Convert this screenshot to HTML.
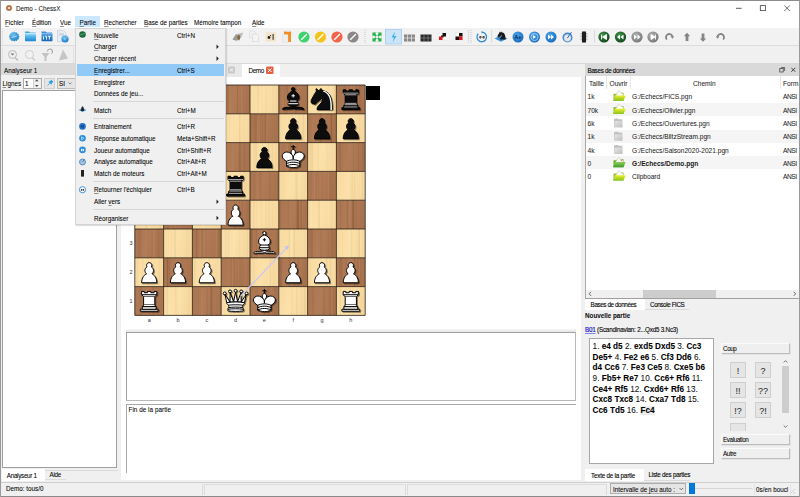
<!DOCTYPE html>
<html><head><meta charset="utf-8">
<style>
*{box-sizing:border-box;margin:0;padding:0}
html,body{width:800px;height:497px;overflow:hidden;background:#f0f0f0}
body{position:relative;font-family:"Liberation Sans",sans-serif;font-size:6.3px;color:#000;line-height:1;-webkit-text-stroke:0.1px rgba(0,0,0,.7)}
.a{position:absolute}
.t{position:absolute;white-space:nowrap}
.u{text-decoration:underline;text-decoration-thickness:0.4px;text-underline-offset:0.65px;text-decoration-color:rgba(0,0,0,.4)}
.sm{font-size:5.6px}
</style></head><body>
<div class="a" style="left:0px;top:0px;width:800px;height:497px;border:1px solid #9a9a9a;border-top-color:#8c8c8c"></div>
<div class="a" style="left:1px;top:1px;width:798px;height:15px;background:#fff"></div>
<div class="a" style="left:5.6px;top:4.6px;width:6.8px;height:6.8px;border-radius:50%;background:#b5764f"></div>
<div class="a" style="left:8px;top:7px;width:2px;height:2px;background:#eadbd0"></div>
<div class="t" style="left:16px;top:5.80px;color:#202020">Demo - ChessX</div>
<svg class="a" style="left:0;top:0" width="800" height="16" viewBox="0 0 800 16"><path d="M736 8.3h5.6" stroke="#333" stroke-width=".8"/><rect x="760.3" y="5.6" width="5.2" height="5" fill="none" stroke="#444" stroke-width=".8"/><path d="M784.3 5.4l5.6 5.6M789.9 5.4l-5.6 5.6" stroke="#333" stroke-width=".7"/></svg>
<div class="a" style="left:1px;top:16px;width:798px;height:12px;background:#fff"></div>
<div class="a" style="left:75px;top:16px;width:25px;height:11px;background:#cce8ff"></div>
<div class="t" style="left:5px;top:20.40px;"><span class="u">F</span>ichier</div>
<div class="t" style="left:32px;top:20.40px;"><span class="u">É</span>dition</div>
<div class="t" style="left:60px;top:20.40px;"><span class="u">V</span>ue</div>
<div class="t" style="left:79.5px;top:20.40px;"><span class="u">P</span>artie</div>
<div class="t" style="left:104px;top:20.40px;"><span class="u">R</span>echercher</div>
<div class="t" style="left:144px;top:20.40px;"><span class="u">B</span>ase de parties</div>
<div class="t" style="left:194px;top:20.40px;">Mémoire tampon</div>
<div class="t" style="left:252px;top:20.40px;"><span class="u">A</span>ide</div>
<div class="a" style="left:1px;top:28px;width:798px;height:17px;background:#f2f2f2"></div>
<div class="a" style="left:1px;top:45px;width:798px;height:1px;background:#dcdcdc"></div>
<div class="a" style="left:1px;top:46px;width:798px;height:17px;background:#f0f0f0"></div>
<div class="a" style="left:1px;top:63px;width:798px;height:1px;background:#d8d8d8"></div>
<svg class="a" style="left:0;top:0" width="800" height="64" viewBox="0 0 800 64">
<defs>
<radialGradient id="gb" cx="0.4" cy="0.35" r="0.7"><stop offset="0" stop-color="#6cc3f2"/><stop offset="1" stop-color="#1b78c4"/></radialGradient>
<radialGradient id="gb2" cx="0.4" cy="0.35" r="0.75"><stop offset="0" stop-color="#4aa6ee"/><stop offset="1" stop-color="#1263b6"/></radialGradient>
<radialGradient id="gg" cx="0.4" cy="0.35" r="0.7"><stop offset="0" stop-color="#3f9a4a"/><stop offset="1" stop-color="#0f3d18"/></radialGradient>
<radialGradient id="gy" cx="0.4" cy="0.35" r="0.7"><stop offset="0" stop-color="#b5b5b5"/><stop offset="1" stop-color="#727272"/></radialGradient>
</defs>
<!-- row1 left -->
<defs>
<linearGradient id="fl1" x1="0" y1="0" x2="0" y2="1"><stop offset="0" stop-color="#b5e4fa"/><stop offset=".35" stop-color="#5dbaf0"/><stop offset="1" stop-color="#1c86d0"/></linearGradient>
<linearGradient id="fl2" x1="0" y1="0" x2="0" y2="1"><stop offset="0" stop-color="#5aa8e6"/><stop offset="1" stop-color="#1462b4"/></linearGradient>
</defs>
<g>
<path d="M14 31.6l1.2 1 1.5-.4.5 1.4 1.5.4-.2 1.5 1.1 1.1-1 1.1.3 1.5-1.5.4-.5 1.4-1.5-.4-1.2 1-1.2-1-1.5.4-.5-1.4-1.5-.4.3-1.5-1-1.1 1.1-1.1-.2-1.5 1.5-.4.5-1.4 1.5.4z" fill="url(#gb)"/>
<path d="M11.2 37.6l5.6-1.6" stroke="#d8f0fc" stroke-width=".8" opacity=".8"/>
<path d="M25 33v-1.6h4.2l.8 1h5.6v.6z" fill="#49a9e6"/>
<rect x="25" y="33.3" width="11" height="7.9" rx=".6" fill="url(#fl1)"/>
<path d="M41.5 33v-1.6h4.2l.8 1h5.6v.6z" fill="#3d8fd8"/>
<rect x="41.5" y="33.3" width="11" height="7.9" rx=".6" fill="url(#fl2)"/>
<path d="M43.5 36.3v3.3M45 36.3h1.5v3.3M48 36.3h2.8M49.4 36.3v3.3" stroke="#f2f8fd" stroke-width=".9" fill="none"/>
<path d="M57.5 30.5h6l2.5 2.5v8.5h-8.5z" fill="#e9eef4" stroke="#b9c3cf" stroke-width=".5"/>
<rect x="59" y="33" width="5" height="3" fill="#cfd9e4"/>
<circle cx="65" cy="39" r="3.6" fill="url(#gb)"/>
<path d="M63.5 37.5c1 .3 1.5 1.3 1.2 2.5M66 36.2c.3 1 .8 1.6 1.7 1.7" stroke="#dff1fb" stroke-width=".5" fill="none"/>
</g>
<!-- row1 after menu -->
<g>
<path d="M232.5 39.5l3.5-5.5 3 1.5-2.5 5.5z" fill="#9a9a9a"/><path d="M237 34l6-1.5-1.5 5-3.5.5z" fill="#bdbdbd"/><ellipse cx="238.7" cy="37.5" rx="1.6" ry="2.8" fill="#8a6a45"/><path d="M236.5 41l3.5-1" stroke="#d9d9d9" stroke-width="1"/>
<path d="M249.5 31h4.5l1.5 1.5v5.5h-6z" fill="#f1f1f1" stroke="#d2d2d2" stroke-width=".5"/><path d="M252.5 34h4.5l1.5 1.5v6h-6z" fill="#f4f4f4" stroke="#cfcfcf" stroke-width=".5"/>
<rect x="265.5" y="32.3" width="10.5" height="9.2" fill="#f3e3c8"/><circle cx="269" cy="37.5" r="1.4" fill="#222"/><circle cx="270.6" cy="35.5" r=".6" fill="#222"/><rect x="272.6" y="34" width="1" height="5.8" fill="#222"/>
<path d="M284 31.5h7v10.5h-7z" fill="#f28d1e"/><path d="M286.5 30.5h3v1.5h-3z" fill="#dedede"/><path d="M282.5 34.5h5.5v7.8h-5.5z" fill="#efefef" stroke="#d5d5d5" stroke-width=".4"/>
<circle cx="304" cy="37" r="5.6" fill="#3fd36f"/><path d="M301.5 39.5l5-5" stroke="#fff" stroke-width="1.4" stroke-linecap="round"/>
<circle cx="320.5" cy="37" r="5.6" fill="#f6c21c"/><path d="M318 39.5l5-5" stroke="#fff" stroke-width="1.4" stroke-linecap="round"/>
<circle cx="337" cy="37" r="5.6" fill="#f2634c"/><path d="M334.5 39.5l5-5" stroke="#fff" stroke-width="1.4" stroke-linecap="round"/>
<circle cx="353" cy="37" r="5.6" fill="#8b8787"/><path d="M350.5 39.5l5-5" stroke="#fff" stroke-width="1.4" stroke-linecap="round"/>
<path d="M365 30v13" stroke="#bdbdbd" stroke-width=".8" stroke-dasharray="1 1"/>
<g fill="#1fb24a"><path d="M372.5 32.5h4l-1.3 1.3 1.6 1.6-1.4 1.4-1.6-1.6-1.3 1.3z"/><path d="M381.5 32.5v4l-1.3-1.3-1.6 1.6-1.4-1.4 1.6-1.6-1.3-1.3z"/><path d="M372.5 41.5v-4l1.3 1.3 1.6-1.6 1.4 1.4-1.6 1.6 1.3 1.3z"/><path d="M381.5 41.5h-4l1.3-1.3-1.6-1.6 1.4-1.4 1.6 1.6 1.3-1.3z"/></g>
<rect x="385.5" y="29.5" width="16" height="14.5" fill="#cce4f7" stroke="#a5cdee" stroke-width=".8"/>
<path d="M395 31.5l-3.5 6h2.5l-1.5 5 4-6.5h-2.5z" fill="#38b2e6"/>
<rect x="404" y="34.5" width="11" height="7" fill="#888"/><path d="M404 38h11M407.5 34.5v7M411.5 34.5v7" stroke="#eee" stroke-width=".7"/>
<rect x="420.5" y="34.5" width="11" height="7" fill="#2a2a2a"/><path d="M420.5 38h11M424 34.5v7M428 34.5v7" stroke="#999" stroke-width=".6"/>
<rect x="439" y="33" width="7" height="7" fill="#fff" stroke="#ddd" stroke-width=".4"/><rect x="442.5" y="33" width="3.5" height="3.5" fill="#111"/><rect x="441" y="35.5" width="2.5" height="2" fill="#111"/><rect x="439" y="36.5" width="3.5" height="3.5" fill="#e01616"/>
<rect x="455.5" y="33" width="7" height="7" fill="#fff" stroke="#ddd" stroke-width=".4"/><rect x="459" y="33" width="3.5" height="3.5" fill="#111"/><rect x="455.5" y="36.5" width="3.5" height="3.5" fill="#111"/><rect x="459" y="36.5" width="3.5" height="3.5" fill="#e01616"/>
<path d="M468.6 30v13" stroke="#d0d0d0" stroke-width=".7"/><path d="M471 30v13" stroke="#bdbdbd" stroke-width=".8" stroke-dasharray="1 1"/>
<path d="M478.2 33.8a4.8 4.8 0 1 0 4-1.6" fill="none" stroke="#2a8ad6" stroke-width="1.3"/><path d="M481.5 31l1.8 1.3-1.6 1.4z" fill="#2a8ad6"/><circle cx="480.4" cy="37.3" r="1.2" fill="#222"/><circle cx="483.6" cy="37.3" r="1.2" fill="#222"/><path d="M479 37.3h6" stroke="#fff" stroke-width=".4"/>
<path d="M491.6 30v13" stroke="#d0d0d0" stroke-width=".7"/>
<path d="M494.5 38.5l6.5-3.2 6.5 3.2-6.5 3.2z" fill="#3f92d8"/>
<g transform="translate(496,29.8) scale(.25)"><path d="M 22,10 C 32.5,11 38.5,18 38,39 L 15,39 C 15,30 25,32.5 23,18 C 24.38,20.91 18.45,25.37 16,27 C 13,29 13.18,31.34 11,31 C 9.958,30.06 12.41,27.96 11,28 C 10,28 11.19,29.23 10,30 C 9,30 5.997,31 6,26 C 6,24 12,14 12,14 C 12,14 13.89,12.1 14,10.5 C 13.27,9.506 13.5,8.5 13.5,7.5 C 14.5,6.5 16.5,10 16.5,10 L 18.5,10 C 18.5,10 19.28,8.008 21,7 C 22,7 22,10 22,10 z" fill="#1a1a1a"/></g>
<circle cx="518" cy="37" r="5.5" fill="url(#gb2)"/><text x="514.6" y="39.2" font-size="5.2" fill="#0a2240" font-weight="bold" font-family="Liberation Sans">A+</text>
<circle cx="534.5" cy="37" r="5.5" fill="url(#gb2)"/><circle cx="534.5" cy="37" r="3.6" fill="none" stroke="#cfe8fb" stroke-width=".7"/><path d="M533 35l3 2-3 2z" fill="#e9f5ff"/>
<circle cx="551" cy="37" r="5.5" fill="url(#gb2)"/><path d="M548 34.6l3 2.4-3 2.4zM551 34.6l3 2.4-3 2.4z" fill="#f2f9ff"/>
<circle cx="567.5" cy="37.5" r="5" fill="#3f86cf"/><circle cx="567.5" cy="37.8" r="3.6" fill="#e6ebef" stroke="#9aa9b6" stroke-width=".4"/><path d="M567.3 38.2l4.2-6" stroke="#2667c2" stroke-width="1"/>
<rect x="582" y="31.5" width="4" height="11" fill="#1e1e1e"/><path d="M581.2 33v8M586.8 33v8" stroke="#555" stroke-width=".7" stroke-dasharray=".8 .8"/>
<path d="M594.5 30v13" stroke="#d0d0d0" stroke-width=".7"/>
<circle cx="604" cy="37" r="5.6" fill="url(#gg)"/><path d="M601.5 34.5v5M606.5 34.5l-4 2.5 4 2.5z" fill="#fff" stroke="#fff" stroke-width=".9"/>
<circle cx="620.5" cy="37" r="5.6" fill="url(#gg)"/><path d="M620 34.5l-3 2.5 3 2.5zM623.5 34.5l-3 2.5 3 2.5z" fill="#fff"/>
<circle cx="637" cy="37" r="5.6" fill="url(#gy)"/><path d="M634 34.5l3 2.5-3 2.5zM637.5 34.5l3 2.5-3 2.5z" fill="#fff"/>
<circle cx="653" cy="37" r="5.6" fill="url(#gy)"/><path d="M655.5 34.5v5M651 34.5l4 2.5-4 2.5z" fill="#fff" stroke="#fff" stroke-width=".9"/>
<path d="M666.8 39.5a3.3 3.3 0 1 1 5.6-3.2" fill="none" stroke="#7d7d7d" stroke-width="1.7"/><path d="M670.5 36.2h3.6l-1.6 2.6z" fill="#7d7d7d"/>
<path d="M687 32.8l-3.2 3.4h1.8v4.8h2.8v-4.8h1.8z" fill="#858585"/>
<path d="M703 41.8l-3.2-3.4h1.8v-4.8h2.8v4.8h1.8z" fill="#858585"/>
<path d="M723.2 39.5a3.3 3.3 0 1 0 -5.6-3.2" fill="none" stroke="#7d7d7d" stroke-width="1.7"/><path d="M719.5 36.2h-3.6l1.6 2.6z" fill="#7d7d7d"/>
</g>
<!-- row2 left -->
<g opacity=".75">
<path d="M2.5 31v13M2.5 48v14" stroke="#c4c4c4" stroke-width=".8" stroke-dasharray="1 1"/>
<circle cx="12.5" cy="54.5" r="4" fill="#eee" stroke="#a9a9a9" stroke-width="1"/><path d="M15 57.5l3 3" stroke="#a9a9a9" stroke-width="1.5"/><path d="M10.5 53.5h4l-2 2z" fill="#555"/>
<circle cx="29.5" cy="54.5" r="4" fill="#f2f2f2" stroke="#c2c2c2" stroke-width="1"/><path d="M32 57.5l3 3" stroke="#c2c2c2" stroke-width="1.5"/>
<path d="M41.5 53h8l-3 4v4h-2v-4z" fill="#b5b5b5"/><path d="M47.5 51.5a2.5 2.5 0 1 1 4 2" fill="none" stroke="#8c8c8c" stroke-width="1.1"/>
<path d="M63 49.5l-4 11 9-2z" fill="#b8b8b8"/>
<path d="M73.5 47v16" stroke="#d5d5d5" stroke-width=".8"/>
</g>
</svg>

<div class="a" style="left:1px;top:64px;width:116px;height:11px;background:#d9d9d9"></div>
<div class="t" style="left:4px;top:68.00px;">Analyseur 1</div>
<div class="t" style="left:2.5px;top:80.80px;"><span class="u">L</span>ignes</div>
<div class="a" style="left:23px;top:77.5px;width:18.5px;height:11px;background:#fff;border:1px solid #a9a9a9"></div>
<div class="a" style="left:33px;top:78.5px;width:7.5px;height:9px;background:#f0f0f0;border-left:1px solid #d0d0d0"></div>
<div class="t" style="left:25px;top:81.40px;">1</div>
<div class="a" style="left:43.5px;top:77.5px;width:11px;height:11px;background:#e5e5e5;border:1px solid #cfcfcf"></div>
<div class="a" style="left:57px;top:77.5px;width:19px;height:11px;background:#e5e5e5;border:1px solid #bdbdbd"></div>
<div class="t" style="left:59px;top:81.40px;">SI</div>
<svg class="a" style="left:0;top:70px" width="120" height="22" viewBox="0 70 120 22"><path d="M35.4 81.3l1.4-1.6 1.4 1.6M35.4 85l1.4 1.6 1.4-1.6" fill="#333" stroke="#333" stroke-width=".5"/><path d="M47.5 85.5l2-2" stroke="#2fa0e6" stroke-width=".9"/><path d="M48.3 81.8l3 3 .6-1.6 1.4-1.4-2-2-1.4 1.4z" fill="#2fa0e6"/><path d="M68.5 82.5l1.6 1.6 1.6-1.6" fill="none" stroke="#444" stroke-width=".6"/></svg>
<div class="a" style="left:2px;top:89.5px;width:115px;height:378px;background:#fff;border:1px solid #a0a0a0"></div>
<div class="a" style="left:44.5px;top:469.5px;width:73px;height:1px;background:#dadada"></div>
<div class="a" style="left:1.5px;top:469px;width:43px;height:12px;background:#fff"></div>
<div class="t" style="left:6.8px;top:472.90px;letter-spacing:-0.3px">Analyseur 1</div>
<div class="t" style="left:49.6px;top:472.10px;letter-spacing:-0.3px">Aide</div>
<div class="a" style="left:44.5px;top:478.5px;width:21.5px;height:1px;background:#dcdcdc"></div>
<div class="a" style="left:120.6px;top:77px;width:460.8px;height:402.5px;background:#fff"></div>
<div class="a" style="left:242px;top:64px;width:38px;height:13px;background:#fff"></div>
<div class="a" style="left:226px;top:64px;width:16px;height:13px;background:#e9e9e9"></div>
<svg class="a" style="left:0;top:60px" width="300" height="20" viewBox="0 60 300 20"><rect x="228" y="66.5" width="7" height="7" rx="1" fill="#c9c9c9"/><path d="M230 68.5l3 3M233 68.5l-3 3" stroke="#fff" stroke-width=".9"/><rect x="266" y="66.5" width="7.5" height="7.5" rx="1" fill="#e5603e"/><path d="M268 68.5l3.5 3.5M271.5 68.5l-3.5 3.5" stroke="#fff" stroke-width="1"/></svg>
<div class="t" style="left:248.6px;top:68.30px;letter-spacing:-0.4px">Demo</div>
<div class="a" style="left:126px;top:329px;width:450px;height:3px;background:linear-gradient(#f6f6f6,#e4e4e4)"></div>
<div class="a" style="left:126px;top:332px;width:450px;height:69px;border:1px solid #a0a0a0;border-right-color:#b8b8b8;border-bottom-color:#b8b8b8;background:#fff"></div>
<div class="a" style="left:126px;top:404px;width:450px;height:1px;background:#a8a8a8"></div>
<div class="a" style="left:126px;top:404px;width:1px;height:69px;background:#a8a8a8"></div>
<div class="t" style="left:128.5px;top:407.20px;letter-spacing:0.05px">Fin de la partie</div>
<svg class="a" style="left:0;top:0" width="800" height="497" viewBox="0 0 800 497">
<defs>
<filter id="sh" x="-20%" y="-20%" width="150%" height="150%"><feGaussianBlur in="SourceAlpha" stdDeviation="0.9"/><feOffset dx="1.2" dy="1.2"/><feComponentTransfer><feFuncA type="linear" slope="0.45"/></feComponentTransfer><feMerge><feMergeNode/><feMergeNode in="SourceGraphic"/></feMerge></filter>
<linearGradient id="dk" x1="0" y1="0" x2="1" y2="0.2"><stop offset="0" stop-color="#a97450"/><stop offset=".5" stop-color="#b07b56"/><stop offset="1" stop-color="#a7724e"/></linearGradient>
<linearGradient id="lt" x1="0" y1="0" x2="1" y2="0.2"><stop offset="0" stop-color="#f8daa0"/><stop offset=".5" stop-color="#fbe0a8"/><stop offset="1" stop-color="#f6d89e"/></linearGradient>
</defs>
<rect x="134.80" y="286.60" width="28.80" height="28.80" fill="url(#dk)"/>
<rect x="134.80" y="257.80" width="28.80" height="28.80" fill="url(#lt)"/>
<rect x="134.80" y="229.00" width="28.80" height="28.80" fill="url(#dk)"/>
<rect x="134.80" y="200.20" width="28.80" height="28.80" fill="url(#lt)"/>
<rect x="134.80" y="171.40" width="28.80" height="28.80" fill="url(#dk)"/>
<rect x="134.80" y="142.60" width="28.80" height="28.80" fill="url(#lt)"/>
<rect x="134.80" y="113.80" width="28.80" height="28.80" fill="url(#dk)"/>
<rect x="134.80" y="85.00" width="28.80" height="28.80" fill="url(#lt)"/>
<rect x="163.60" y="286.60" width="28.80" height="28.80" fill="url(#lt)"/>
<rect x="163.60" y="257.80" width="28.80" height="28.80" fill="url(#dk)"/>
<rect x="163.60" y="229.00" width="28.80" height="28.80" fill="url(#lt)"/>
<rect x="163.60" y="200.20" width="28.80" height="28.80" fill="url(#dk)"/>
<rect x="163.60" y="171.40" width="28.80" height="28.80" fill="url(#lt)"/>
<rect x="163.60" y="142.60" width="28.80" height="28.80" fill="url(#dk)"/>
<rect x="163.60" y="113.80" width="28.80" height="28.80" fill="url(#lt)"/>
<rect x="163.60" y="85.00" width="28.80" height="28.80" fill="url(#dk)"/>
<rect x="192.40" y="286.60" width="28.80" height="28.80" fill="url(#dk)"/>
<rect x="192.40" y="257.80" width="28.80" height="28.80" fill="url(#lt)"/>
<rect x="192.40" y="229.00" width="28.80" height="28.80" fill="url(#dk)"/>
<rect x="192.40" y="200.20" width="28.80" height="28.80" fill="url(#lt)"/>
<rect x="192.40" y="171.40" width="28.80" height="28.80" fill="url(#dk)"/>
<rect x="192.40" y="142.60" width="28.80" height="28.80" fill="url(#lt)"/>
<rect x="192.40" y="113.80" width="28.80" height="28.80" fill="url(#dk)"/>
<rect x="192.40" y="85.00" width="28.80" height="28.80" fill="url(#lt)"/>
<rect x="221.20" y="286.60" width="28.80" height="28.80" fill="url(#lt)"/>
<rect x="221.20" y="257.80" width="28.80" height="28.80" fill="url(#dk)"/>
<rect x="221.20" y="229.00" width="28.80" height="28.80" fill="url(#lt)"/>
<rect x="221.20" y="200.20" width="28.80" height="28.80" fill="url(#dk)"/>
<rect x="221.20" y="171.40" width="28.80" height="28.80" fill="url(#lt)"/>
<rect x="221.20" y="142.60" width="28.80" height="28.80" fill="url(#dk)"/>
<rect x="221.20" y="113.80" width="28.80" height="28.80" fill="url(#lt)"/>
<rect x="221.20" y="85.00" width="28.80" height="28.80" fill="url(#dk)"/>
<rect x="250.00" y="286.60" width="28.80" height="28.80" fill="url(#dk)"/>
<rect x="250.00" y="257.80" width="28.80" height="28.80" fill="url(#lt)"/>
<rect x="250.00" y="229.00" width="28.80" height="28.80" fill="url(#dk)"/>
<rect x="250.00" y="200.20" width="28.80" height="28.80" fill="url(#lt)"/>
<rect x="250.00" y="171.40" width="28.80" height="28.80" fill="url(#dk)"/>
<rect x="250.00" y="142.60" width="28.80" height="28.80" fill="url(#lt)"/>
<rect x="250.00" y="113.80" width="28.80" height="28.80" fill="url(#dk)"/>
<rect x="250.00" y="85.00" width="28.80" height="28.80" fill="url(#lt)"/>
<rect x="278.80" y="286.60" width="28.80" height="28.80" fill="url(#lt)"/>
<rect x="278.80" y="257.80" width="28.80" height="28.80" fill="url(#dk)"/>
<rect x="278.80" y="229.00" width="28.80" height="28.80" fill="url(#lt)"/>
<rect x="278.80" y="200.20" width="28.80" height="28.80" fill="url(#dk)"/>
<rect x="278.80" y="171.40" width="28.80" height="28.80" fill="url(#lt)"/>
<rect x="278.80" y="142.60" width="28.80" height="28.80" fill="url(#dk)"/>
<rect x="278.80" y="113.80" width="28.80" height="28.80" fill="url(#lt)"/>
<rect x="278.80" y="85.00" width="28.80" height="28.80" fill="url(#dk)"/>
<rect x="307.60" y="286.60" width="28.80" height="28.80" fill="url(#dk)"/>
<rect x="307.60" y="257.80" width="28.80" height="28.80" fill="url(#lt)"/>
<rect x="307.60" y="229.00" width="28.80" height="28.80" fill="url(#dk)"/>
<rect x="307.60" y="200.20" width="28.80" height="28.80" fill="url(#lt)"/>
<rect x="307.60" y="171.40" width="28.80" height="28.80" fill="url(#dk)"/>
<rect x="307.60" y="142.60" width="28.80" height="28.80" fill="url(#lt)"/>
<rect x="307.60" y="113.80" width="28.80" height="28.80" fill="url(#dk)"/>
<rect x="307.60" y="85.00" width="28.80" height="28.80" fill="url(#lt)"/>
<rect x="336.40" y="286.60" width="28.80" height="28.80" fill="url(#lt)"/>
<rect x="336.40" y="257.80" width="28.80" height="28.80" fill="url(#dk)"/>
<rect x="336.40" y="229.00" width="28.80" height="28.80" fill="url(#lt)"/>
<rect x="336.40" y="200.20" width="28.80" height="28.80" fill="url(#dk)"/>
<rect x="336.40" y="171.40" width="28.80" height="28.80" fill="url(#lt)"/>
<rect x="336.40" y="142.60" width="28.80" height="28.80" fill="url(#dk)"/>
<rect x="336.40" y="113.80" width="28.80" height="28.80" fill="url(#lt)"/>
<rect x="336.40" y="85.00" width="28.80" height="28.80" fill="url(#dk)"/>
<g><rect x="144.5" y="286.6" width="0.6" height="28.8" fill="#d8a57c" opacity="0.13"/><rect x="150.2" y="286.6" width="0.8" height="28.8" fill="#5a3218" opacity="0.06"/><rect x="136.8" y="286.6" width="0.9" height="28.8" fill="#d8a57c" opacity="0.06"/><rect x="147.2" y="286.6" width="1.4" height="28.8" fill="#d8a57c" opacity="0.07"/><rect x="152.6" y="286.6" width="1.5" height="28.8" fill="#5a3218" opacity="0.13"/><rect x="162.0" y="286.6" width="0.5" height="28.8" fill="#d8a57c" opacity="0.16"/><rect x="139.7" y="286.6" width="0.5" height="28.8" fill="#5a3218" opacity="0.09"/><rect x="140.6" y="286.6" width="1.1" height="28.8" fill="#5a3218" opacity="0.13"/><rect x="150.5" y="286.6" width="0.5" height="28.8" fill="#d8a57c" opacity="0.06"/><rect x="154.0" y="257.8" width="0.9" height="28.8" fill="#c9a268" opacity="0.09"/><rect x="147.9" y="257.8" width="0.8" height="28.8" fill="#c9a268" opacity="0.15"/><rect x="142.3" y="257.8" width="1.1" height="28.8" fill="#c9a268" opacity="0.12"/><rect x="155.3" y="257.8" width="0.7" height="28.8" fill="#fff6dc" opacity="0.18"/><rect x="147.0" y="257.8" width="1.3" height="28.8" fill="#c9a268" opacity="0.07"/><rect x="136.9" y="257.8" width="1.2" height="28.8" fill="#c9a268" opacity="0.15"/><rect x="159.3" y="257.8" width="0.8" height="28.8" fill="#c9a268" opacity="0.14"/><rect x="151.3" y="257.8" width="0.9" height="28.8" fill="#c9a268" opacity="0.16"/><rect x="148.5" y="257.8" width="1.2" height="28.8" fill="#c9a268" opacity="0.06"/><rect x="153.1" y="229.0" width="1.6" height="28.8" fill="#d8a57c" opacity="0.16"/><rect x="146.1" y="229.0" width="1.2" height="28.8" fill="#5a3218" opacity="0.05"/><rect x="140.3" y="229.0" width="0.5" height="28.8" fill="#5a3218" opacity="0.06"/><rect x="139.3" y="229.0" width="0.7" height="28.8" fill="#5a3218" opacity="0.10"/><rect x="138.0" y="229.0" width="0.9" height="28.8" fill="#5a3218" opacity="0.12"/><rect x="157.8" y="229.0" width="1.4" height="28.8" fill="#5a3218" opacity="0.09"/><rect x="145.4" y="229.0" width="1.5" height="28.8" fill="#d8a57c" opacity="0.17"/><rect x="140.5" y="229.0" width="0.7" height="28.8" fill="#5a3218" opacity="0.08"/><rect x="151.6" y="229.0" width="0.7" height="28.8" fill="#5a3218" opacity="0.05"/><rect x="145.7" y="200.2" width="1.1" height="28.8" fill="#c9a268" opacity="0.17"/><rect x="149.6" y="200.2" width="1.1" height="28.8" fill="#fff6dc" opacity="0.14"/><rect x="159.9" y="200.2" width="1.3" height="28.8" fill="#c9a268" opacity="0.16"/><rect x="146.3" y="200.2" width="0.9" height="28.8" fill="#c9a268" opacity="0.06"/><rect x="137.5" y="200.2" width="0.5" height="28.8" fill="#fff6dc" opacity="0.08"/><rect x="144.9" y="200.2" width="0.5" height="28.8" fill="#fff6dc" opacity="0.05"/><rect x="138.5" y="200.2" width="0.8" height="28.8" fill="#c9a268" opacity="0.05"/><rect x="152.3" y="200.2" width="0.6" height="28.8" fill="#fff6dc" opacity="0.08"/><rect x="145.6" y="200.2" width="0.5" height="28.8" fill="#c9a268" opacity="0.16"/><rect x="148.3" y="171.4" width="1.0" height="28.8" fill="#d8a57c" opacity="0.06"/><rect x="145.0" y="171.4" width="0.7" height="28.8" fill="#d8a57c" opacity="0.16"/><rect x="136.4" y="171.4" width="1.5" height="28.8" fill="#d8a57c" opacity="0.12"/><rect x="150.4" y="171.4" width="0.4" height="28.8" fill="#5a3218" opacity="0.12"/><rect x="158.9" y="171.4" width="1.2" height="28.8" fill="#5a3218" opacity="0.08"/><rect x="140.3" y="171.4" width="1.3" height="28.8" fill="#5a3218" opacity="0.12"/><rect x="144.6" y="171.4" width="0.7" height="28.8" fill="#5a3218" opacity="0.16"/><rect x="158.7" y="171.4" width="1.4" height="28.8" fill="#5a3218" opacity="0.16"/><rect x="141.9" y="171.4" width="1.0" height="28.8" fill="#d8a57c" opacity="0.10"/><rect x="136.5" y="142.6" width="0.7" height="28.8" fill="#c9a268" opacity="0.08"/><rect x="161.4" y="142.6" width="0.9" height="28.8" fill="#c9a268" opacity="0.17"/><rect x="161.4" y="142.6" width="0.8" height="28.8" fill="#fff6dc" opacity="0.08"/><rect x="141.1" y="142.6" width="0.6" height="28.8" fill="#c9a268" opacity="0.13"/><rect x="158.3" y="142.6" width="1.0" height="28.8" fill="#c9a268" opacity="0.13"/><rect x="138.1" y="142.6" width="1.2" height="28.8" fill="#c9a268" opacity="0.17"/><rect x="155.9" y="142.6" width="1.0" height="28.8" fill="#c9a268" opacity="0.07"/><rect x="144.7" y="142.6" width="1.4" height="28.8" fill="#c9a268" opacity="0.18"/><rect x="146.6" y="142.6" width="1.5" height="28.8" fill="#fff6dc" opacity="0.14"/><rect x="139.2" y="113.8" width="0.6" height="28.8" fill="#5a3218" opacity="0.17"/><rect x="139.7" y="113.8" width="1.4" height="28.8" fill="#5a3218" opacity="0.18"/><rect x="145.2" y="113.8" width="1.1" height="28.8" fill="#d8a57c" opacity="0.07"/><rect x="161.8" y="113.8" width="1.2" height="28.8" fill="#5a3218" opacity="0.12"/><rect x="147.4" y="113.8" width="1.4" height="28.8" fill="#d8a57c" opacity="0.16"/><rect x="142.5" y="113.8" width="0.8" height="28.8" fill="#5a3218" opacity="0.08"/><rect x="142.8" y="113.8" width="0.9" height="28.8" fill="#5a3218" opacity="0.07"/><rect x="145.3" y="113.8" width="0.9" height="28.8" fill="#5a3218" opacity="0.13"/><rect x="147.1" y="113.8" width="1.5" height="28.8" fill="#5a3218" opacity="0.12"/><rect x="149.8" y="85.0" width="0.4" height="28.8" fill="#fff6dc" opacity="0.11"/><rect x="135.9" y="85.0" width="1.4" height="28.8" fill="#c9a268" opacity="0.07"/><rect x="155.2" y="85.0" width="1.1" height="28.8" fill="#c9a268" opacity="0.09"/><rect x="150.7" y="85.0" width="1.3" height="28.8" fill="#c9a268" opacity="0.06"/><rect x="142.5" y="85.0" width="0.7" height="28.8" fill="#c9a268" opacity="0.15"/><rect x="150.9" y="85.0" width="1.3" height="28.8" fill="#c9a268" opacity="0.17"/><rect x="152.2" y="85.0" width="1.0" height="28.8" fill="#c9a268" opacity="0.12"/><rect x="147.9" y="85.0" width="1.0" height="28.8" fill="#c9a268" opacity="0.11"/><rect x="154.5" y="85.0" width="1.5" height="28.8" fill="#fff6dc" opacity="0.17"/><rect x="179.6" y="286.6" width="1.5" height="28.8" fill="#fff6dc" opacity="0.16"/><rect x="167.9" y="286.6" width="0.9" height="28.8" fill="#fff6dc" opacity="0.06"/><rect x="166.6" y="286.6" width="1.2" height="28.8" fill="#c9a268" opacity="0.15"/><rect x="168.7" y="286.6" width="1.3" height="28.8" fill="#fff6dc" opacity="0.14"/><rect x="188.3" y="286.6" width="1.6" height="28.8" fill="#c9a268" opacity="0.08"/><rect x="175.3" y="286.6" width="1.0" height="28.8" fill="#c9a268" opacity="0.18"/><rect x="168.9" y="286.6" width="0.9" height="28.8" fill="#fff6dc" opacity="0.12"/><rect x="169.8" y="286.6" width="0.8" height="28.8" fill="#fff6dc" opacity="0.14"/><rect x="179.4" y="286.6" width="0.9" height="28.8" fill="#fff6dc" opacity="0.05"/><rect x="181.3" y="257.8" width="1.0" height="28.8" fill="#5a3218" opacity="0.06"/><rect x="185.7" y="257.8" width="1.6" height="28.8" fill="#d8a57c" opacity="0.06"/><rect x="165.7" y="257.8" width="1.3" height="28.8" fill="#d8a57c" opacity="0.09"/><rect x="175.9" y="257.8" width="1.5" height="28.8" fill="#d8a57c" opacity="0.16"/><rect x="168.6" y="257.8" width="1.5" height="28.8" fill="#5a3218" opacity="0.12"/><rect x="167.0" y="257.8" width="0.5" height="28.8" fill="#5a3218" opacity="0.14"/><rect x="166.5" y="257.8" width="1.5" height="28.8" fill="#5a3218" opacity="0.13"/><rect x="166.8" y="257.8" width="1.4" height="28.8" fill="#5a3218" opacity="0.06"/><rect x="176.8" y="257.8" width="0.8" height="28.8" fill="#5a3218" opacity="0.12"/><rect x="171.8" y="229.0" width="0.6" height="28.8" fill="#fff6dc" opacity="0.12"/><rect x="167.5" y="229.0" width="0.6" height="28.8" fill="#fff6dc" opacity="0.06"/><rect x="173.0" y="229.0" width="0.8" height="28.8" fill="#fff6dc" opacity="0.15"/><rect x="178.0" y="229.0" width="0.6" height="28.8" fill="#fff6dc" opacity="0.10"/><rect x="171.3" y="229.0" width="0.4" height="28.8" fill="#c9a268" opacity="0.15"/><rect x="169.7" y="229.0" width="1.0" height="28.8" fill="#fff6dc" opacity="0.17"/><rect x="186.5" y="229.0" width="0.9" height="28.8" fill="#c9a268" opacity="0.11"/><rect x="175.1" y="229.0" width="1.0" height="28.8" fill="#c9a268" opacity="0.14"/><rect x="173.8" y="229.0" width="1.4" height="28.8" fill="#c9a268" opacity="0.14"/><rect x="175.4" y="200.2" width="0.8" height="28.8" fill="#d8a57c" opacity="0.06"/><rect x="166.5" y="200.2" width="1.3" height="28.8" fill="#d8a57c" opacity="0.08"/><rect x="166.9" y="200.2" width="1.4" height="28.8" fill="#5a3218" opacity="0.16"/><rect x="172.2" y="200.2" width="0.7" height="28.8" fill="#5a3218" opacity="0.09"/><rect x="168.8" y="200.2" width="0.9" height="28.8" fill="#5a3218" opacity="0.08"/><rect x="190.7" y="200.2" width="1.1" height="28.8" fill="#5a3218" opacity="0.08"/><rect x="172.9" y="200.2" width="0.8" height="28.8" fill="#5a3218" opacity="0.05"/><rect x="177.3" y="200.2" width="1.0" height="28.8" fill="#5a3218" opacity="0.08"/><rect x="164.7" y="200.2" width="0.7" height="28.8" fill="#5a3218" opacity="0.06"/><rect x="165.7" y="171.4" width="0.4" height="28.8" fill="#fff6dc" opacity="0.09"/><rect x="180.3" y="171.4" width="1.0" height="28.8" fill="#c9a268" opacity="0.15"/><rect x="183.8" y="171.4" width="1.5" height="28.8" fill="#fff6dc" opacity="0.10"/><rect x="191.0" y="171.4" width="0.6" height="28.8" fill="#c9a268" opacity="0.14"/><rect x="165.8" y="171.4" width="1.4" height="28.8" fill="#c9a268" opacity="0.17"/><rect x="184.3" y="171.4" width="1.4" height="28.8" fill="#c9a268" opacity="0.07"/><rect x="178.1" y="171.4" width="1.4" height="28.8" fill="#c9a268" opacity="0.15"/><rect x="180.3" y="171.4" width="1.5" height="28.8" fill="#c9a268" opacity="0.14"/><rect x="170.8" y="171.4" width="0.4" height="28.8" fill="#c9a268" opacity="0.07"/><rect x="167.4" y="142.6" width="1.4" height="28.8" fill="#5a3218" opacity="0.12"/><rect x="181.4" y="142.6" width="1.2" height="28.8" fill="#d8a57c" opacity="0.11"/><rect x="186.0" y="142.6" width="1.3" height="28.8" fill="#5a3218" opacity="0.12"/><rect x="182.3" y="142.6" width="0.5" height="28.8" fill="#d8a57c" opacity="0.15"/><rect x="166.6" y="142.6" width="0.7" height="28.8" fill="#d8a57c" opacity="0.14"/><rect x="184.4" y="142.6" width="1.6" height="28.8" fill="#5a3218" opacity="0.11"/><rect x="177.4" y="142.6" width="1.2" height="28.8" fill="#5a3218" opacity="0.15"/><rect x="181.8" y="142.6" width="0.5" height="28.8" fill="#d8a57c" opacity="0.07"/><rect x="184.5" y="142.6" width="0.8" height="28.8" fill="#d8a57c" opacity="0.12"/><rect x="166.2" y="113.8" width="0.7" height="28.8" fill="#c9a268" opacity="0.14"/><rect x="182.7" y="113.8" width="0.7" height="28.8" fill="#c9a268" opacity="0.12"/><rect x="177.1" y="113.8" width="0.5" height="28.8" fill="#fff6dc" opacity="0.17"/><rect x="190.8" y="113.8" width="1.5" height="28.8" fill="#c9a268" opacity="0.05"/><rect x="186.6" y="113.8" width="1.6" height="28.8" fill="#fff6dc" opacity="0.11"/><rect x="170.2" y="113.8" width="1.5" height="28.8" fill="#c9a268" opacity="0.08"/><rect x="168.4" y="113.8" width="1.0" height="28.8" fill="#fff6dc" opacity="0.17"/><rect x="186.6" y="113.8" width="1.0" height="28.8" fill="#c9a268" opacity="0.17"/><rect x="170.8" y="113.8" width="1.5" height="28.8" fill="#fff6dc" opacity="0.11"/><rect x="164.7" y="85.0" width="1.0" height="28.8" fill="#d8a57c" opacity="0.11"/><rect x="168.4" y="85.0" width="0.8" height="28.8" fill="#5a3218" opacity="0.09"/><rect x="164.6" y="85.0" width="1.3" height="28.8" fill="#d8a57c" opacity="0.16"/><rect x="189.4" y="85.0" width="1.3" height="28.8" fill="#d8a57c" opacity="0.17"/><rect x="174.6" y="85.0" width="0.9" height="28.8" fill="#5a3218" opacity="0.18"/><rect x="174.3" y="85.0" width="0.9" height="28.8" fill="#d8a57c" opacity="0.09"/><rect x="167.3" y="85.0" width="1.4" height="28.8" fill="#5a3218" opacity="0.09"/><rect x="171.3" y="85.0" width="0.7" height="28.8" fill="#d8a57c" opacity="0.12"/><rect x="174.6" y="85.0" width="1.5" height="28.8" fill="#5a3218" opacity="0.16"/><rect x="210.3" y="286.6" width="1.5" height="28.8" fill="#5a3218" opacity="0.17"/><rect x="212.7" y="286.6" width="0.5" height="28.8" fill="#5a3218" opacity="0.15"/><rect x="213.6" y="286.6" width="1.2" height="28.8" fill="#d8a57c" opacity="0.09"/><rect x="218.2" y="286.6" width="0.6" height="28.8" fill="#d8a57c" opacity="0.11"/><rect x="201.4" y="286.6" width="1.3" height="28.8" fill="#d8a57c" opacity="0.18"/><rect x="211.0" y="286.6" width="0.8" height="28.8" fill="#5a3218" opacity="0.12"/><rect x="197.9" y="286.6" width="0.6" height="28.8" fill="#5a3218" opacity="0.08"/><rect x="206.7" y="286.6" width="0.7" height="28.8" fill="#5a3218" opacity="0.17"/><rect x="205.5" y="286.6" width="0.6" height="28.8" fill="#d8a57c" opacity="0.08"/><rect x="202.6" y="257.8" width="0.5" height="28.8" fill="#fff6dc" opacity="0.08"/><rect x="208.7" y="257.8" width="1.5" height="28.8" fill="#c9a268" opacity="0.15"/><rect x="204.5" y="257.8" width="1.0" height="28.8" fill="#fff6dc" opacity="0.10"/><rect x="195.1" y="257.8" width="0.7" height="28.8" fill="#fff6dc" opacity="0.18"/><rect x="206.9" y="257.8" width="1.2" height="28.8" fill="#fff6dc" opacity="0.16"/><rect x="200.7" y="257.8" width="0.7" height="28.8" fill="#c9a268" opacity="0.10"/><rect x="219.0" y="257.8" width="1.4" height="28.8" fill="#fff6dc" opacity="0.16"/><rect x="194.3" y="257.8" width="1.3" height="28.8" fill="#c9a268" opacity="0.17"/><rect x="209.1" y="257.8" width="0.4" height="28.8" fill="#c9a268" opacity="0.10"/><rect x="215.5" y="229.0" width="1.4" height="28.8" fill="#d8a57c" opacity="0.18"/><rect x="196.3" y="229.0" width="0.6" height="28.8" fill="#5a3218" opacity="0.12"/><rect x="218.6" y="229.0" width="1.3" height="28.8" fill="#5a3218" opacity="0.13"/><rect x="205.7" y="229.0" width="1.1" height="28.8" fill="#5a3218" opacity="0.06"/><rect x="199.6" y="229.0" width="1.5" height="28.8" fill="#d8a57c" opacity="0.13"/><rect x="196.8" y="229.0" width="0.7" height="28.8" fill="#5a3218" opacity="0.13"/><rect x="196.4" y="229.0" width="0.5" height="28.8" fill="#5a3218" opacity="0.12"/><rect x="203.8" y="229.0" width="0.7" height="28.8" fill="#d8a57c" opacity="0.13"/><rect x="201.5" y="229.0" width="1.0" height="28.8" fill="#5a3218" opacity="0.17"/><rect x="217.1" y="200.2" width="1.0" height="28.8" fill="#fff6dc" opacity="0.08"/><rect x="219.1" y="200.2" width="1.2" height="28.8" fill="#fff6dc" opacity="0.09"/><rect x="206.8" y="200.2" width="1.2" height="28.8" fill="#fff6dc" opacity="0.10"/><rect x="211.3" y="200.2" width="1.5" height="28.8" fill="#fff6dc" opacity="0.08"/><rect x="202.5" y="200.2" width="0.9" height="28.8" fill="#fff6dc" opacity="0.14"/><rect x="214.8" y="200.2" width="1.3" height="28.8" fill="#fff6dc" opacity="0.12"/><rect x="219.4" y="200.2" width="0.8" height="28.8" fill="#fff6dc" opacity="0.16"/><rect x="199.3" y="200.2" width="1.3" height="28.8" fill="#c9a268" opacity="0.09"/><rect x="206.7" y="200.2" width="0.6" height="28.8" fill="#c9a268" opacity="0.08"/><rect x="211.2" y="171.4" width="1.5" height="28.8" fill="#5a3218" opacity="0.07"/><rect x="199.1" y="171.4" width="1.6" height="28.8" fill="#d8a57c" opacity="0.07"/><rect x="195.0" y="171.4" width="0.9" height="28.8" fill="#5a3218" opacity="0.17"/><rect x="213.0" y="171.4" width="1.6" height="28.8" fill="#d8a57c" opacity="0.17"/><rect x="198.4" y="171.4" width="1.5" height="28.8" fill="#d8a57c" opacity="0.15"/><rect x="211.2" y="171.4" width="0.9" height="28.8" fill="#d8a57c" opacity="0.10"/><rect x="197.9" y="171.4" width="0.4" height="28.8" fill="#5a3218" opacity="0.09"/><rect x="219.0" y="171.4" width="0.5" height="28.8" fill="#d8a57c" opacity="0.18"/><rect x="203.0" y="171.4" width="1.4" height="28.8" fill="#5a3218" opacity="0.16"/><rect x="194.7" y="142.6" width="1.0" height="28.8" fill="#c9a268" opacity="0.10"/><rect x="198.6" y="142.6" width="0.8" height="28.8" fill="#fff6dc" opacity="0.17"/><rect x="204.4" y="142.6" width="1.4" height="28.8" fill="#fff6dc" opacity="0.15"/><rect x="194.3" y="142.6" width="0.5" height="28.8" fill="#fff6dc" opacity="0.17"/><rect x="213.4" y="142.6" width="1.5" height="28.8" fill="#fff6dc" opacity="0.09"/><rect x="219.1" y="142.6" width="1.1" height="28.8" fill="#c9a268" opacity="0.08"/><rect x="201.9" y="142.6" width="0.7" height="28.8" fill="#c9a268" opacity="0.05"/><rect x="218.0" y="142.6" width="1.2" height="28.8" fill="#fff6dc" opacity="0.17"/><rect x="199.7" y="142.6" width="1.0" height="28.8" fill="#c9a268" opacity="0.17"/><rect x="203.8" y="113.8" width="0.7" height="28.8" fill="#5a3218" opacity="0.11"/><rect x="218.3" y="113.8" width="0.6" height="28.8" fill="#5a3218" opacity="0.15"/><rect x="215.4" y="113.8" width="1.3" height="28.8" fill="#d8a57c" opacity="0.13"/><rect x="202.0" y="113.8" width="0.8" height="28.8" fill="#d8a57c" opacity="0.15"/><rect x="198.7" y="113.8" width="1.3" height="28.8" fill="#d8a57c" opacity="0.08"/><rect x="194.3" y="113.8" width="1.1" height="28.8" fill="#5a3218" opacity="0.09"/><rect x="217.1" y="113.8" width="1.6" height="28.8" fill="#d8a57c" opacity="0.08"/><rect x="196.0" y="113.8" width="1.0" height="28.8" fill="#5a3218" opacity="0.14"/><rect x="199.7" y="113.8" width="0.9" height="28.8" fill="#5a3218" opacity="0.13"/><rect x="213.4" y="85.0" width="1.4" height="28.8" fill="#fff6dc" opacity="0.14"/><rect x="215.9" y="85.0" width="0.8" height="28.8" fill="#c9a268" opacity="0.12"/><rect x="213.2" y="85.0" width="0.6" height="28.8" fill="#fff6dc" opacity="0.08"/><rect x="197.5" y="85.0" width="1.5" height="28.8" fill="#fff6dc" opacity="0.13"/><rect x="204.0" y="85.0" width="1.6" height="28.8" fill="#fff6dc" opacity="0.12"/><rect x="215.1" y="85.0" width="1.2" height="28.8" fill="#fff6dc" opacity="0.18"/><rect x="206.1" y="85.0" width="1.4" height="28.8" fill="#c9a268" opacity="0.16"/><rect x="194.5" y="85.0" width="0.8" height="28.8" fill="#fff6dc" opacity="0.07"/><rect x="219.5" y="85.0" width="1.1" height="28.8" fill="#c9a268" opacity="0.17"/><rect x="245.4" y="286.6" width="0.9" height="28.8" fill="#c9a268" opacity="0.08"/><rect x="247.5" y="286.6" width="0.5" height="28.8" fill="#c9a268" opacity="0.13"/><rect x="228.0" y="286.6" width="0.8" height="28.8" fill="#fff6dc" opacity="0.07"/><rect x="229.0" y="286.6" width="1.1" height="28.8" fill="#fff6dc" opacity="0.13"/><rect x="222.5" y="286.6" width="0.8" height="28.8" fill="#fff6dc" opacity="0.14"/><rect x="230.6" y="286.6" width="0.6" height="28.8" fill="#c9a268" opacity="0.15"/><rect x="223.9" y="286.6" width="0.5" height="28.8" fill="#c9a268" opacity="0.10"/><rect x="239.3" y="286.6" width="0.5" height="28.8" fill="#c9a268" opacity="0.07"/><rect x="233.2" y="286.6" width="0.7" height="28.8" fill="#c9a268" opacity="0.09"/><rect x="230.6" y="257.8" width="1.1" height="28.8" fill="#5a3218" opacity="0.10"/><rect x="245.4" y="257.8" width="1.6" height="28.8" fill="#d8a57c" opacity="0.10"/><rect x="241.7" y="257.8" width="0.6" height="28.8" fill="#5a3218" opacity="0.05"/><rect x="233.6" y="257.8" width="1.4" height="28.8" fill="#5a3218" opacity="0.10"/><rect x="234.6" y="257.8" width="0.6" height="28.8" fill="#5a3218" opacity="0.05"/><rect x="239.4" y="257.8" width="1.5" height="28.8" fill="#5a3218" opacity="0.06"/><rect x="232.1" y="257.8" width="1.0" height="28.8" fill="#d8a57c" opacity="0.07"/><rect x="236.2" y="257.8" width="1.5" height="28.8" fill="#5a3218" opacity="0.06"/><rect x="243.8" y="257.8" width="1.6" height="28.8" fill="#d8a57c" opacity="0.08"/><rect x="247.5" y="229.0" width="1.6" height="28.8" fill="#fff6dc" opacity="0.11"/><rect x="247.0" y="229.0" width="0.9" height="28.8" fill="#c9a268" opacity="0.17"/><rect x="244.3" y="229.0" width="0.6" height="28.8" fill="#fff6dc" opacity="0.15"/><rect x="233.0" y="229.0" width="1.4" height="28.8" fill="#fff6dc" opacity="0.16"/><rect x="228.0" y="229.0" width="0.9" height="28.8" fill="#c9a268" opacity="0.12"/><rect x="225.5" y="229.0" width="0.7" height="28.8" fill="#c9a268" opacity="0.14"/><rect x="223.3" y="229.0" width="1.1" height="28.8" fill="#fff6dc" opacity="0.15"/><rect x="244.7" y="229.0" width="0.5" height="28.8" fill="#c9a268" opacity="0.13"/><rect x="239.0" y="229.0" width="0.8" height="28.8" fill="#c9a268" opacity="0.10"/><rect x="233.6" y="200.2" width="1.2" height="28.8" fill="#5a3218" opacity="0.11"/><rect x="222.8" y="200.2" width="1.1" height="28.8" fill="#d8a57c" opacity="0.11"/><rect x="242.7" y="200.2" width="1.3" height="28.8" fill="#d8a57c" opacity="0.11"/><rect x="234.9" y="200.2" width="0.5" height="28.8" fill="#5a3218" opacity="0.07"/><rect x="224.7" y="200.2" width="0.9" height="28.8" fill="#d8a57c" opacity="0.12"/><rect x="239.3" y="200.2" width="0.5" height="28.8" fill="#5a3218" opacity="0.15"/><rect x="235.9" y="200.2" width="0.5" height="28.8" fill="#5a3218" opacity="0.12"/><rect x="247.7" y="200.2" width="0.6" height="28.8" fill="#5a3218" opacity="0.16"/><rect x="241.8" y="200.2" width="1.4" height="28.8" fill="#5a3218" opacity="0.08"/><rect x="235.4" y="171.4" width="1.5" height="28.8" fill="#fff6dc" opacity="0.17"/><rect x="243.3" y="171.4" width="1.5" height="28.8" fill="#c9a268" opacity="0.06"/><rect x="242.5" y="171.4" width="0.6" height="28.8" fill="#fff6dc" opacity="0.17"/><rect x="244.1" y="171.4" width="0.6" height="28.8" fill="#c9a268" opacity="0.12"/><rect x="227.8" y="171.4" width="0.7" height="28.8" fill="#fff6dc" opacity="0.12"/><rect x="223.2" y="171.4" width="0.6" height="28.8" fill="#c9a268" opacity="0.07"/><rect x="240.4" y="171.4" width="1.5" height="28.8" fill="#c9a268" opacity="0.07"/><rect x="225.3" y="171.4" width="1.0" height="28.8" fill="#c9a268" opacity="0.13"/><rect x="245.6" y="171.4" width="1.1" height="28.8" fill="#c9a268" opacity="0.13"/><rect x="225.0" y="142.6" width="1.6" height="28.8" fill="#5a3218" opacity="0.13"/><rect x="243.6" y="142.6" width="0.7" height="28.8" fill="#5a3218" opacity="0.18"/><rect x="231.9" y="142.6" width="1.3" height="28.8" fill="#d8a57c" opacity="0.11"/><rect x="242.1" y="142.6" width="0.5" height="28.8" fill="#d8a57c" opacity="0.16"/><rect x="239.3" y="142.6" width="1.6" height="28.8" fill="#5a3218" opacity="0.13"/><rect x="230.6" y="142.6" width="0.4" height="28.8" fill="#d8a57c" opacity="0.05"/><rect x="238.7" y="142.6" width="0.9" height="28.8" fill="#5a3218" opacity="0.12"/><rect x="225.7" y="142.6" width="0.7" height="28.8" fill="#d8a57c" opacity="0.13"/><rect x="222.3" y="142.6" width="0.8" height="28.8" fill="#5a3218" opacity="0.06"/><rect x="228.2" y="113.8" width="1.1" height="28.8" fill="#fff6dc" opacity="0.13"/><rect x="238.9" y="113.8" width="1.0" height="28.8" fill="#c9a268" opacity="0.07"/><rect x="228.7" y="113.8" width="0.6" height="28.8" fill="#c9a268" opacity="0.06"/><rect x="245.6" y="113.8" width="1.3" height="28.8" fill="#fff6dc" opacity="0.10"/><rect x="222.5" y="113.8" width="1.2" height="28.8" fill="#c9a268" opacity="0.12"/><rect x="239.5" y="113.8" width="0.9" height="28.8" fill="#c9a268" opacity="0.17"/><rect x="228.9" y="113.8" width="1.5" height="28.8" fill="#c9a268" opacity="0.06"/><rect x="233.1" y="113.8" width="0.7" height="28.8" fill="#c9a268" opacity="0.06"/><rect x="222.5" y="113.8" width="1.1" height="28.8" fill="#fff6dc" opacity="0.17"/><rect x="227.5" y="85.0" width="1.1" height="28.8" fill="#5a3218" opacity="0.12"/><rect x="244.0" y="85.0" width="0.6" height="28.8" fill="#d8a57c" opacity="0.09"/><rect x="223.5" y="85.0" width="1.5" height="28.8" fill="#5a3218" opacity="0.15"/><rect x="222.4" y="85.0" width="1.4" height="28.8" fill="#5a3218" opacity="0.15"/><rect x="242.1" y="85.0" width="0.9" height="28.8" fill="#d8a57c" opacity="0.08"/><rect x="228.4" y="85.0" width="0.4" height="28.8" fill="#5a3218" opacity="0.09"/><rect x="240.8" y="85.0" width="1.4" height="28.8" fill="#d8a57c" opacity="0.14"/><rect x="237.0" y="85.0" width="0.9" height="28.8" fill="#5a3218" opacity="0.15"/><rect x="229.3" y="85.0" width="1.2" height="28.8" fill="#d8a57c" opacity="0.18"/><rect x="274.6" y="286.6" width="0.4" height="28.8" fill="#d8a57c" opacity="0.08"/><rect x="270.9" y="286.6" width="1.5" height="28.8" fill="#d8a57c" opacity="0.15"/><rect x="274.6" y="286.6" width="0.8" height="28.8" fill="#5a3218" opacity="0.08"/><rect x="267.9" y="286.6" width="1.2" height="28.8" fill="#5a3218" opacity="0.14"/><rect x="263.6" y="286.6" width="1.4" height="28.8" fill="#5a3218" opacity="0.14"/><rect x="262.7" y="286.6" width="1.3" height="28.8" fill="#d8a57c" opacity="0.12"/><rect x="256.7" y="286.6" width="1.1" height="28.8" fill="#5a3218" opacity="0.06"/><rect x="254.9" y="286.6" width="0.4" height="28.8" fill="#5a3218" opacity="0.06"/><rect x="260.2" y="286.6" width="0.6" height="28.8" fill="#d8a57c" opacity="0.05"/><rect x="269.6" y="257.8" width="1.2" height="28.8" fill="#c9a268" opacity="0.14"/><rect x="252.8" y="257.8" width="1.1" height="28.8" fill="#c9a268" opacity="0.10"/><rect x="273.0" y="257.8" width="1.5" height="28.8" fill="#c9a268" opacity="0.06"/><rect x="275.5" y="257.8" width="1.5" height="28.8" fill="#fff6dc" opacity="0.06"/><rect x="254.0" y="257.8" width="0.4" height="28.8" fill="#c9a268" opacity="0.16"/><rect x="268.0" y="257.8" width="1.4" height="28.8" fill="#fff6dc" opacity="0.13"/><rect x="253.7" y="257.8" width="0.5" height="28.8" fill="#fff6dc" opacity="0.15"/><rect x="259.6" y="257.8" width="0.9" height="28.8" fill="#fff6dc" opacity="0.05"/><rect x="258.6" y="257.8" width="1.3" height="28.8" fill="#fff6dc" opacity="0.10"/><rect x="276.8" y="229.0" width="1.0" height="28.8" fill="#5a3218" opacity="0.16"/><rect x="251.8" y="229.0" width="0.9" height="28.8" fill="#5a3218" opacity="0.11"/><rect x="260.3" y="229.0" width="1.2" height="28.8" fill="#d8a57c" opacity="0.12"/><rect x="274.1" y="229.0" width="0.5" height="28.8" fill="#d8a57c" opacity="0.16"/><rect x="251.0" y="229.0" width="0.6" height="28.8" fill="#5a3218" opacity="0.15"/><rect x="251.1" y="229.0" width="1.0" height="28.8" fill="#5a3218" opacity="0.11"/><rect x="255.9" y="229.0" width="1.0" height="28.8" fill="#5a3218" opacity="0.10"/><rect x="258.0" y="229.0" width="1.5" height="28.8" fill="#d8a57c" opacity="0.09"/><rect x="269.7" y="229.0" width="1.0" height="28.8" fill="#5a3218" opacity="0.06"/><rect x="253.2" y="200.2" width="1.3" height="28.8" fill="#c9a268" opacity="0.14"/><rect x="267.8" y="200.2" width="0.8" height="28.8" fill="#c9a268" opacity="0.10"/><rect x="274.9" y="200.2" width="0.5" height="28.8" fill="#fff6dc" opacity="0.17"/><rect x="256.5" y="200.2" width="0.7" height="28.8" fill="#c9a268" opacity="0.17"/><rect x="261.2" y="200.2" width="1.5" height="28.8" fill="#c9a268" opacity="0.08"/><rect x="265.2" y="200.2" width="1.3" height="28.8" fill="#c9a268" opacity="0.15"/><rect x="260.3" y="200.2" width="0.8" height="28.8" fill="#c9a268" opacity="0.07"/><rect x="268.7" y="200.2" width="1.3" height="28.8" fill="#c9a268" opacity="0.07"/><rect x="271.7" y="200.2" width="1.1" height="28.8" fill="#c9a268" opacity="0.07"/><rect x="274.7" y="171.4" width="0.7" height="28.8" fill="#d8a57c" opacity="0.07"/><rect x="269.8" y="171.4" width="1.4" height="28.8" fill="#d8a57c" opacity="0.07"/><rect x="257.6" y="171.4" width="0.8" height="28.8" fill="#d8a57c" opacity="0.12"/><rect x="259.8" y="171.4" width="0.6" height="28.8" fill="#5a3218" opacity="0.18"/><rect x="253.7" y="171.4" width="1.6" height="28.8" fill="#5a3218" opacity="0.06"/><rect x="277.4" y="171.4" width="1.4" height="28.8" fill="#5a3218" opacity="0.15"/><rect x="256.3" y="171.4" width="1.2" height="28.8" fill="#d8a57c" opacity="0.06"/><rect x="261.4" y="171.4" width="0.4" height="28.8" fill="#5a3218" opacity="0.10"/><rect x="269.6" y="171.4" width="1.0" height="28.8" fill="#5a3218" opacity="0.13"/><rect x="254.8" y="142.6" width="1.1" height="28.8" fill="#c9a268" opacity="0.10"/><rect x="275.3" y="142.6" width="0.9" height="28.8" fill="#c9a268" opacity="0.12"/><rect x="262.3" y="142.6" width="0.7" height="28.8" fill="#c9a268" opacity="0.14"/><rect x="271.7" y="142.6" width="1.2" height="28.8" fill="#c9a268" opacity="0.16"/><rect x="268.2" y="142.6" width="0.9" height="28.8" fill="#c9a268" opacity="0.09"/><rect x="253.6" y="142.6" width="0.9" height="28.8" fill="#c9a268" opacity="0.15"/><rect x="267.9" y="142.6" width="0.7" height="28.8" fill="#c9a268" opacity="0.11"/><rect x="267.7" y="142.6" width="0.9" height="28.8" fill="#c9a268" opacity="0.14"/><rect x="255.9" y="142.6" width="1.2" height="28.8" fill="#c9a268" opacity="0.15"/><rect x="264.1" y="113.8" width="1.6" height="28.8" fill="#5a3218" opacity="0.05"/><rect x="255.3" y="113.8" width="1.3" height="28.8" fill="#5a3218" opacity="0.17"/><rect x="253.7" y="113.8" width="1.1" height="28.8" fill="#5a3218" opacity="0.12"/><rect x="264.7" y="113.8" width="1.2" height="28.8" fill="#5a3218" opacity="0.16"/><rect x="262.0" y="113.8" width="1.5" height="28.8" fill="#5a3218" opacity="0.08"/><rect x="261.5" y="113.8" width="1.3" height="28.8" fill="#5a3218" opacity="0.07"/><rect x="260.5" y="113.8" width="0.5" height="28.8" fill="#5a3218" opacity="0.09"/><rect x="251.4" y="113.8" width="0.9" height="28.8" fill="#5a3218" opacity="0.10"/><rect x="260.4" y="113.8" width="0.7" height="28.8" fill="#5a3218" opacity="0.08"/><rect x="276.2" y="85.0" width="1.0" height="28.8" fill="#c9a268" opacity="0.08"/><rect x="261.5" y="85.0" width="0.7" height="28.8" fill="#c9a268" opacity="0.07"/><rect x="272.7" y="85.0" width="1.2" height="28.8" fill="#c9a268" opacity="0.11"/><rect x="257.1" y="85.0" width="1.6" height="28.8" fill="#c9a268" opacity="0.10"/><rect x="272.9" y="85.0" width="1.4" height="28.8" fill="#fff6dc" opacity="0.11"/><rect x="265.7" y="85.0" width="0.6" height="28.8" fill="#c9a268" opacity="0.16"/><rect x="273.8" y="85.0" width="0.7" height="28.8" fill="#fff6dc" opacity="0.10"/><rect x="262.4" y="85.0" width="0.6" height="28.8" fill="#c9a268" opacity="0.05"/><rect x="258.5" y="85.0" width="0.7" height="28.8" fill="#c9a268" opacity="0.09"/><rect x="291.3" y="286.6" width="1.2" height="28.8" fill="#c9a268" opacity="0.14"/><rect x="304.7" y="286.6" width="1.4" height="28.8" fill="#c9a268" opacity="0.06"/><rect x="304.1" y="286.6" width="1.3" height="28.8" fill="#c9a268" opacity="0.07"/><rect x="296.8" y="286.6" width="0.4" height="28.8" fill="#c9a268" opacity="0.05"/><rect x="297.4" y="286.6" width="0.7" height="28.8" fill="#fff6dc" opacity="0.06"/><rect x="286.1" y="286.6" width="1.3" height="28.8" fill="#fff6dc" opacity="0.10"/><rect x="304.0" y="286.6" width="1.4" height="28.8" fill="#c9a268" opacity="0.07"/><rect x="296.1" y="286.6" width="1.3" height="28.8" fill="#c9a268" opacity="0.14"/><rect x="300.9" y="286.6" width="1.4" height="28.8" fill="#c9a268" opacity="0.08"/><rect x="294.0" y="257.8" width="1.3" height="28.8" fill="#5a3218" opacity="0.11"/><rect x="294.7" y="257.8" width="0.7" height="28.8" fill="#d8a57c" opacity="0.08"/><rect x="293.0" y="257.8" width="0.5" height="28.8" fill="#d8a57c" opacity="0.11"/><rect x="293.0" y="257.8" width="1.0" height="28.8" fill="#5a3218" opacity="0.12"/><rect x="280.0" y="257.8" width="1.4" height="28.8" fill="#5a3218" opacity="0.11"/><rect x="297.6" y="257.8" width="1.4" height="28.8" fill="#5a3218" opacity="0.10"/><rect x="305.5" y="257.8" width="0.5" height="28.8" fill="#5a3218" opacity="0.13"/><rect x="280.6" y="257.8" width="1.1" height="28.8" fill="#5a3218" opacity="0.14"/><rect x="288.7" y="257.8" width="1.6" height="28.8" fill="#5a3218" opacity="0.12"/><rect x="303.9" y="229.0" width="0.4" height="28.8" fill="#c9a268" opacity="0.14"/><rect x="288.9" y="229.0" width="1.4" height="28.8" fill="#c9a268" opacity="0.10"/><rect x="293.9" y="229.0" width="1.3" height="28.8" fill="#c9a268" opacity="0.08"/><rect x="291.1" y="229.0" width="1.1" height="28.8" fill="#fff6dc" opacity="0.16"/><rect x="302.0" y="229.0" width="0.9" height="28.8" fill="#fff6dc" opacity="0.12"/><rect x="293.4" y="229.0" width="1.6" height="28.8" fill="#c9a268" opacity="0.14"/><rect x="288.7" y="229.0" width="0.8" height="28.8" fill="#c9a268" opacity="0.09"/><rect x="296.8" y="229.0" width="1.3" height="28.8" fill="#c9a268" opacity="0.06"/><rect x="303.5" y="229.0" width="1.1" height="28.8" fill="#fff6dc" opacity="0.06"/><rect x="280.0" y="200.2" width="0.6" height="28.8" fill="#5a3218" opacity="0.17"/><rect x="297.4" y="200.2" width="1.3" height="28.8" fill="#5a3218" opacity="0.17"/><rect x="296.3" y="200.2" width="1.2" height="28.8" fill="#5a3218" opacity="0.14"/><rect x="298.1" y="200.2" width="0.7" height="28.8" fill="#5a3218" opacity="0.14"/><rect x="300.2" y="200.2" width="0.5" height="28.8" fill="#d8a57c" opacity="0.07"/><rect x="300.6" y="200.2" width="1.5" height="28.8" fill="#5a3218" opacity="0.14"/><rect x="301.8" y="200.2" width="1.3" height="28.8" fill="#d8a57c" opacity="0.12"/><rect x="287.9" y="200.2" width="0.9" height="28.8" fill="#5a3218" opacity="0.09"/><rect x="297.0" y="200.2" width="1.5" height="28.8" fill="#5a3218" opacity="0.06"/><rect x="280.9" y="171.4" width="0.5" height="28.8" fill="#c9a268" opacity="0.16"/><rect x="304.4" y="171.4" width="0.9" height="28.8" fill="#c9a268" opacity="0.05"/><rect x="295.7" y="171.4" width="1.5" height="28.8" fill="#c9a268" opacity="0.18"/><rect x="290.9" y="171.4" width="0.5" height="28.8" fill="#fff6dc" opacity="0.13"/><rect x="283.9" y="171.4" width="0.4" height="28.8" fill="#c9a268" opacity="0.05"/><rect x="283.1" y="171.4" width="1.6" height="28.8" fill="#c9a268" opacity="0.06"/><rect x="283.3" y="171.4" width="0.4" height="28.8" fill="#fff6dc" opacity="0.14"/><rect x="299.5" y="171.4" width="0.6" height="28.8" fill="#c9a268" opacity="0.06"/><rect x="298.9" y="171.4" width="1.4" height="28.8" fill="#fff6dc" opacity="0.14"/><rect x="296.6" y="142.6" width="1.3" height="28.8" fill="#5a3218" opacity="0.11"/><rect x="286.6" y="142.6" width="1.6" height="28.8" fill="#d8a57c" opacity="0.14"/><rect x="280.2" y="142.6" width="1.2" height="28.8" fill="#d8a57c" opacity="0.16"/><rect x="288.1" y="142.6" width="1.3" height="28.8" fill="#5a3218" opacity="0.07"/><rect x="292.8" y="142.6" width="0.5" height="28.8" fill="#5a3218" opacity="0.10"/><rect x="291.6" y="142.6" width="1.2" height="28.8" fill="#5a3218" opacity="0.07"/><rect x="289.5" y="142.6" width="1.2" height="28.8" fill="#5a3218" opacity="0.13"/><rect x="290.1" y="142.6" width="1.3" height="28.8" fill="#5a3218" opacity="0.17"/><rect x="295.0" y="142.6" width="0.8" height="28.8" fill="#5a3218" opacity="0.06"/><rect x="298.6" y="113.8" width="1.4" height="28.8" fill="#c9a268" opacity="0.09"/><rect x="306.0" y="113.8" width="1.4" height="28.8" fill="#fff6dc" opacity="0.13"/><rect x="291.3" y="113.8" width="1.5" height="28.8" fill="#c9a268" opacity="0.10"/><rect x="295.9" y="113.8" width="1.5" height="28.8" fill="#fff6dc" opacity="0.15"/><rect x="279.8" y="113.8" width="0.7" height="28.8" fill="#c9a268" opacity="0.10"/><rect x="301.7" y="113.8" width="1.5" height="28.8" fill="#c9a268" opacity="0.06"/><rect x="301.6" y="113.8" width="1.4" height="28.8" fill="#fff6dc" opacity="0.12"/><rect x="302.6" y="113.8" width="1.4" height="28.8" fill="#c9a268" opacity="0.14"/><rect x="289.1" y="113.8" width="0.5" height="28.8" fill="#c9a268" opacity="0.12"/><rect x="285.2" y="85.0" width="1.3" height="28.8" fill="#d8a57c" opacity="0.17"/><rect x="296.1" y="85.0" width="1.2" height="28.8" fill="#d8a57c" opacity="0.11"/><rect x="286.6" y="85.0" width="1.3" height="28.8" fill="#5a3218" opacity="0.15"/><rect x="282.2" y="85.0" width="1.4" height="28.8" fill="#d8a57c" opacity="0.15"/><rect x="295.3" y="85.0" width="1.5" height="28.8" fill="#5a3218" opacity="0.17"/><rect x="292.6" y="85.0" width="1.1" height="28.8" fill="#d8a57c" opacity="0.07"/><rect x="284.6" y="85.0" width="1.2" height="28.8" fill="#5a3218" opacity="0.10"/><rect x="290.6" y="85.0" width="1.0" height="28.8" fill="#d8a57c" opacity="0.07"/><rect x="306.5" y="85.0" width="0.8" height="28.8" fill="#5a3218" opacity="0.06"/><rect x="329.7" y="286.6" width="0.6" height="28.8" fill="#d8a57c" opacity="0.13"/><rect x="322.5" y="286.6" width="0.4" height="28.8" fill="#5a3218" opacity="0.05"/><rect x="331.8" y="286.6" width="1.0" height="28.8" fill="#d8a57c" opacity="0.12"/><rect x="329.5" y="286.6" width="0.9" height="28.8" fill="#5a3218" opacity="0.17"/><rect x="330.5" y="286.6" width="1.6" height="28.8" fill="#d8a57c" opacity="0.08"/><rect x="314.0" y="286.6" width="0.6" height="28.8" fill="#d8a57c" opacity="0.06"/><rect x="323.5" y="286.6" width="1.4" height="28.8" fill="#5a3218" opacity="0.11"/><rect x="333.0" y="286.6" width="0.5" height="28.8" fill="#5a3218" opacity="0.13"/><rect x="311.8" y="286.6" width="1.6" height="28.8" fill="#5a3218" opacity="0.08"/><rect x="325.8" y="257.8" width="1.5" height="28.8" fill="#c9a268" opacity="0.14"/><rect x="320.6" y="257.8" width="0.6" height="28.8" fill="#c9a268" opacity="0.18"/><rect x="314.5" y="257.8" width="0.4" height="28.8" fill="#c9a268" opacity="0.08"/><rect x="332.8" y="257.8" width="1.5" height="28.8" fill="#fff6dc" opacity="0.16"/><rect x="329.7" y="257.8" width="1.3" height="28.8" fill="#c9a268" opacity="0.13"/><rect x="310.1" y="257.8" width="0.6" height="28.8" fill="#c9a268" opacity="0.15"/><rect x="326.7" y="257.8" width="0.8" height="28.8" fill="#c9a268" opacity="0.13"/><rect x="311.4" y="257.8" width="0.8" height="28.8" fill="#fff6dc" opacity="0.08"/><rect x="321.5" y="257.8" width="0.6" height="28.8" fill="#fff6dc" opacity="0.08"/><rect x="326.8" y="229.0" width="0.4" height="28.8" fill="#d8a57c" opacity="0.14"/><rect x="309.6" y="229.0" width="1.5" height="28.8" fill="#5a3218" opacity="0.08"/><rect x="331.8" y="229.0" width="1.5" height="28.8" fill="#5a3218" opacity="0.07"/><rect x="311.2" y="229.0" width="1.5" height="28.8" fill="#5a3218" opacity="0.16"/><rect x="320.7" y="229.0" width="0.8" height="28.8" fill="#5a3218" opacity="0.16"/><rect x="325.4" y="229.0" width="0.6" height="28.8" fill="#d8a57c" opacity="0.08"/><rect x="327.7" y="229.0" width="1.1" height="28.8" fill="#5a3218" opacity="0.07"/><rect x="315.7" y="229.0" width="0.9" height="28.8" fill="#d8a57c" opacity="0.07"/><rect x="331.1" y="229.0" width="0.8" height="28.8" fill="#5a3218" opacity="0.07"/><rect x="317.1" y="200.2" width="1.5" height="28.8" fill="#c9a268" opacity="0.06"/><rect x="310.1" y="200.2" width="1.5" height="28.8" fill="#fff6dc" opacity="0.14"/><rect x="321.4" y="200.2" width="0.7" height="28.8" fill="#fff6dc" opacity="0.08"/><rect x="318.4" y="200.2" width="1.6" height="28.8" fill="#c9a268" opacity="0.18"/><rect x="311.2" y="200.2" width="0.7" height="28.8" fill="#fff6dc" opacity="0.17"/><rect x="328.1" y="200.2" width="0.8" height="28.8" fill="#fff6dc" opacity="0.18"/><rect x="330.2" y="200.2" width="0.8" height="28.8" fill="#fff6dc" opacity="0.07"/><rect x="330.9" y="200.2" width="1.0" height="28.8" fill="#c9a268" opacity="0.07"/><rect x="333.0" y="200.2" width="0.7" height="28.8" fill="#fff6dc" opacity="0.12"/><rect x="313.4" y="171.4" width="1.3" height="28.8" fill="#d8a57c" opacity="0.14"/><rect x="310.7" y="171.4" width="0.5" height="28.8" fill="#5a3218" opacity="0.13"/><rect x="315.9" y="171.4" width="0.6" height="28.8" fill="#5a3218" opacity="0.13"/><rect x="330.4" y="171.4" width="1.1" height="28.8" fill="#d8a57c" opacity="0.08"/><rect x="328.2" y="171.4" width="0.9" height="28.8" fill="#d8a57c" opacity="0.14"/><rect x="330.3" y="171.4" width="0.8" height="28.8" fill="#5a3218" opacity="0.16"/><rect x="321.8" y="171.4" width="0.4" height="28.8" fill="#5a3218" opacity="0.17"/><rect x="332.0" y="171.4" width="0.7" height="28.8" fill="#5a3218" opacity="0.07"/><rect x="318.4" y="171.4" width="0.6" height="28.8" fill="#5a3218" opacity="0.10"/><rect x="308.7" y="142.6" width="1.0" height="28.8" fill="#c9a268" opacity="0.11"/><rect x="311.8" y="142.6" width="1.3" height="28.8" fill="#c9a268" opacity="0.16"/><rect x="317.2" y="142.6" width="1.3" height="28.8" fill="#c9a268" opacity="0.10"/><rect x="310.2" y="142.6" width="1.4" height="28.8" fill="#c9a268" opacity="0.17"/><rect x="322.4" y="142.6" width="1.0" height="28.8" fill="#fff6dc" opacity="0.12"/><rect x="334.5" y="142.6" width="0.7" height="28.8" fill="#fff6dc" opacity="0.07"/><rect x="315.3" y="142.6" width="1.4" height="28.8" fill="#fff6dc" opacity="0.05"/><rect x="327.3" y="142.6" width="0.6" height="28.8" fill="#c9a268" opacity="0.05"/><rect x="324.0" y="142.6" width="1.0" height="28.8" fill="#fff6dc" opacity="0.14"/><rect x="331.9" y="113.8" width="1.3" height="28.8" fill="#d8a57c" opacity="0.06"/><rect x="321.8" y="113.8" width="1.0" height="28.8" fill="#d8a57c" opacity="0.09"/><rect x="319.5" y="113.8" width="0.6" height="28.8" fill="#5a3218" opacity="0.13"/><rect x="312.5" y="113.8" width="1.1" height="28.8" fill="#d8a57c" opacity="0.15"/><rect x="330.7" y="113.8" width="1.5" height="28.8" fill="#5a3218" opacity="0.10"/><rect x="331.1" y="113.8" width="1.0" height="28.8" fill="#5a3218" opacity="0.10"/><rect x="329.4" y="113.8" width="0.8" height="28.8" fill="#d8a57c" opacity="0.08"/><rect x="320.3" y="113.8" width="1.6" height="28.8" fill="#5a3218" opacity="0.15"/><rect x="330.4" y="113.8" width="1.4" height="28.8" fill="#5a3218" opacity="0.06"/><rect x="334.3" y="85.0" width="1.5" height="28.8" fill="#c9a268" opacity="0.08"/><rect x="325.6" y="85.0" width="0.8" height="28.8" fill="#fff6dc" opacity="0.12"/><rect x="320.2" y="85.0" width="1.0" height="28.8" fill="#fff6dc" opacity="0.05"/><rect x="334.6" y="85.0" width="1.3" height="28.8" fill="#c9a268" opacity="0.17"/><rect x="330.3" y="85.0" width="1.5" height="28.8" fill="#fff6dc" opacity="0.17"/><rect x="325.8" y="85.0" width="0.7" height="28.8" fill="#fff6dc" opacity="0.14"/><rect x="323.1" y="85.0" width="1.5" height="28.8" fill="#fff6dc" opacity="0.13"/><rect x="322.5" y="85.0" width="0.9" height="28.8" fill="#fff6dc" opacity="0.17"/><rect x="316.8" y="85.0" width="1.2" height="28.8" fill="#c9a268" opacity="0.07"/><rect x="363.0" y="286.6" width="1.0" height="28.8" fill="#c9a268" opacity="0.08"/><rect x="351.7" y="286.6" width="0.6" height="28.8" fill="#fff6dc" opacity="0.07"/><rect x="345.3" y="286.6" width="0.9" height="28.8" fill="#fff6dc" opacity="0.09"/><rect x="339.8" y="286.6" width="1.1" height="28.8" fill="#c9a268" opacity="0.16"/><rect x="352.7" y="286.6" width="1.2" height="28.8" fill="#c9a268" opacity="0.08"/><rect x="349.8" y="286.6" width="1.1" height="28.8" fill="#c9a268" opacity="0.13"/><rect x="345.7" y="286.6" width="0.7" height="28.8" fill="#c9a268" opacity="0.08"/><rect x="347.7" y="286.6" width="1.1" height="28.8" fill="#c9a268" opacity="0.05"/><rect x="360.5" y="286.6" width="0.7" height="28.8" fill="#c9a268" opacity="0.12"/><rect x="345.0" y="257.8" width="1.6" height="28.8" fill="#5a3218" opacity="0.09"/><rect x="341.6" y="257.8" width="0.5" height="28.8" fill="#5a3218" opacity="0.16"/><rect x="339.1" y="257.8" width="0.9" height="28.8" fill="#5a3218" opacity="0.11"/><rect x="340.3" y="257.8" width="0.7" height="28.8" fill="#5a3218" opacity="0.17"/><rect x="341.5" y="257.8" width="0.8" height="28.8" fill="#5a3218" opacity="0.10"/><rect x="353.9" y="257.8" width="1.4" height="28.8" fill="#5a3218" opacity="0.16"/><rect x="357.2" y="257.8" width="1.3" height="28.8" fill="#5a3218" opacity="0.15"/><rect x="358.4" y="257.8" width="1.3" height="28.8" fill="#d8a57c" opacity="0.17"/><rect x="360.7" y="257.8" width="0.4" height="28.8" fill="#5a3218" opacity="0.15"/><rect x="350.7" y="229.0" width="1.6" height="28.8" fill="#c9a268" opacity="0.12"/><rect x="358.4" y="229.0" width="1.4" height="28.8" fill="#c9a268" opacity="0.13"/><rect x="349.5" y="229.0" width="0.9" height="28.8" fill="#fff6dc" opacity="0.14"/><rect x="347.9" y="229.0" width="1.1" height="28.8" fill="#fff6dc" opacity="0.10"/><rect x="358.5" y="229.0" width="1.4" height="28.8" fill="#c9a268" opacity="0.11"/><rect x="342.3" y="229.0" width="0.8" height="28.8" fill="#c9a268" opacity="0.07"/><rect x="353.0" y="229.0" width="0.5" height="28.8" fill="#fff6dc" opacity="0.17"/><rect x="360.0" y="229.0" width="1.4" height="28.8" fill="#fff6dc" opacity="0.17"/><rect x="348.8" y="229.0" width="1.5" height="28.8" fill="#fff6dc" opacity="0.05"/><rect x="352.5" y="200.2" width="1.0" height="28.8" fill="#5a3218" opacity="0.17"/><rect x="351.8" y="200.2" width="1.6" height="28.8" fill="#5a3218" opacity="0.12"/><rect x="355.8" y="200.2" width="0.9" height="28.8" fill="#5a3218" opacity="0.10"/><rect x="346.8" y="200.2" width="1.5" height="28.8" fill="#5a3218" opacity="0.14"/><rect x="340.1" y="200.2" width="0.8" height="28.8" fill="#5a3218" opacity="0.10"/><rect x="352.8" y="200.2" width="1.5" height="28.8" fill="#5a3218" opacity="0.18"/><rect x="349.2" y="200.2" width="1.1" height="28.8" fill="#d8a57c" opacity="0.18"/><rect x="351.6" y="200.2" width="1.4" height="28.8" fill="#d8a57c" opacity="0.07"/><rect x="363.6" y="200.2" width="1.4" height="28.8" fill="#d8a57c" opacity="0.12"/><rect x="361.4" y="171.4" width="1.2" height="28.8" fill="#c9a268" opacity="0.16"/><rect x="361.2" y="171.4" width="0.9" height="28.8" fill="#fff6dc" opacity="0.07"/><rect x="351.1" y="171.4" width="1.0" height="28.8" fill="#fff6dc" opacity="0.07"/><rect x="354.3" y="171.4" width="1.1" height="28.8" fill="#c9a268" opacity="0.10"/><rect x="354.5" y="171.4" width="0.5" height="28.8" fill="#c9a268" opacity="0.10"/><rect x="345.6" y="171.4" width="1.2" height="28.8" fill="#fff6dc" opacity="0.05"/><rect x="360.0" y="171.4" width="1.1" height="28.8" fill="#fff6dc" opacity="0.14"/><rect x="350.7" y="171.4" width="1.1" height="28.8" fill="#c9a268" opacity="0.08"/><rect x="351.6" y="171.4" width="1.6" height="28.8" fill="#c9a268" opacity="0.12"/><rect x="340.7" y="142.6" width="0.6" height="28.8" fill="#d8a57c" opacity="0.15"/><rect x="340.1" y="142.6" width="0.6" height="28.8" fill="#5a3218" opacity="0.12"/><rect x="353.8" y="142.6" width="1.4" height="28.8" fill="#d8a57c" opacity="0.06"/><rect x="358.1" y="142.6" width="0.8" height="28.8" fill="#5a3218" opacity="0.14"/><rect x="341.9" y="142.6" width="0.7" height="28.8" fill="#5a3218" opacity="0.06"/><rect x="353.0" y="142.6" width="0.8" height="28.8" fill="#5a3218" opacity="0.11"/><rect x="338.9" y="142.6" width="1.5" height="28.8" fill="#5a3218" opacity="0.13"/><rect x="349.2" y="142.6" width="1.1" height="28.8" fill="#d8a57c" opacity="0.08"/><rect x="362.3" y="142.6" width="1.4" height="28.8" fill="#5a3218" opacity="0.09"/><rect x="359.3" y="113.8" width="0.8" height="28.8" fill="#c9a268" opacity="0.13"/><rect x="350.7" y="113.8" width="1.5" height="28.8" fill="#c9a268" opacity="0.08"/><rect x="356.7" y="113.8" width="0.7" height="28.8" fill="#c9a268" opacity="0.09"/><rect x="350.4" y="113.8" width="1.4" height="28.8" fill="#fff6dc" opacity="0.08"/><rect x="347.0" y="113.8" width="0.6" height="28.8" fill="#fff6dc" opacity="0.18"/><rect x="352.4" y="113.8" width="0.5" height="28.8" fill="#c9a268" opacity="0.12"/><rect x="348.2" y="113.8" width="0.5" height="28.8" fill="#c9a268" opacity="0.07"/><rect x="346.8" y="113.8" width="0.7" height="28.8" fill="#fff6dc" opacity="0.07"/><rect x="343.8" y="113.8" width="0.4" height="28.8" fill="#fff6dc" opacity="0.14"/><rect x="341.6" y="85.0" width="1.2" height="28.8" fill="#d8a57c" opacity="0.06"/><rect x="359.8" y="85.0" width="0.6" height="28.8" fill="#5a3218" opacity="0.11"/><rect x="359.0" y="85.0" width="0.6" height="28.8" fill="#5a3218" opacity="0.10"/><rect x="347.5" y="85.0" width="1.6" height="28.8" fill="#5a3218" opacity="0.08"/><rect x="350.9" y="85.0" width="0.7" height="28.8" fill="#d8a57c" opacity="0.11"/><rect x="356.3" y="85.0" width="0.7" height="28.8" fill="#5a3218" opacity="0.17"/><rect x="347.3" y="85.0" width="0.7" height="28.8" fill="#d8a57c" opacity="0.13"/><rect x="360.8" y="85.0" width="0.5" height="28.8" fill="#5a3218" opacity="0.12"/><rect x="344.6" y="85.0" width="1.3" height="28.8" fill="#5a3218" opacity="0.10"/></g>
<path d="M134.80 85.00V315.40M134.80 85.00H365.20M163.60 85.00V315.40M134.80 113.80H365.20M192.40 85.00V315.40M134.80 142.60H365.20M221.20 85.00V315.40M134.80 171.40H365.20M250.00 85.00V315.40M134.80 200.20H365.20M278.80 85.00V315.40M134.80 229.00H365.20M307.60 85.00V315.40M134.80 257.80H365.20M336.40 85.00V315.40M134.80 286.60H365.20M365.20 85.00V315.40M134.80 315.40H365.20" stroke="#2a1d12" stroke-width="0.8" fill="none"/>
<text x="149.20" y="322" font-size="5.5" text-anchor="middle" fill="#333" font-family="Liberation Sans">a</text>
<text x="178.00" y="322" font-size="5.5" text-anchor="middle" fill="#333" font-family="Liberation Sans">b</text>
<text x="206.80" y="322" font-size="5.5" text-anchor="middle" fill="#333" font-family="Liberation Sans">c</text>
<text x="235.60" y="322" font-size="5.5" text-anchor="middle" fill="#333" font-family="Liberation Sans">d</text>
<text x="264.40" y="322" font-size="5.5" text-anchor="middle" fill="#333" font-family="Liberation Sans">e</text>
<text x="293.20" y="322" font-size="5.5" text-anchor="middle" fill="#333" font-family="Liberation Sans">f</text>
<text x="322.00" y="322" font-size="5.5" text-anchor="middle" fill="#333" font-family="Liberation Sans">g</text>
<text x="350.80" y="322" font-size="5.5" text-anchor="middle" fill="#333" font-family="Liberation Sans">h</text>
<text x="131" y="303.00" font-size="5.5" text-anchor="middle" fill="#333" font-family="Liberation Sans">1</text>
<text x="131" y="274.20" font-size="5.5" text-anchor="middle" fill="#333" font-family="Liberation Sans">2</text>
<text x="131" y="245.40" font-size="5.5" text-anchor="middle" fill="#333" font-family="Liberation Sans">3</text>
<text x="131" y="216.60" font-size="5.5" text-anchor="middle" fill="#333" font-family="Liberation Sans">4</text>
<text x="131" y="187.80" font-size="5.5" text-anchor="middle" fill="#333" font-family="Liberation Sans">5</text>
<text x="131" y="159.00" font-size="5.5" text-anchor="middle" fill="#333" font-family="Liberation Sans">6</text>
<text x="131" y="130.20" font-size="5.5" text-anchor="middle" fill="#333" font-family="Liberation Sans">7</text>
<text x="131" y="101.40" font-size="5.5" text-anchor="middle" fill="#333" font-family="Liberation Sans">8</text>
<g transform="translate(278.35,83.89) scale(0.66)" filter="url(#sh)"><g fill="#111" stroke="#000" stroke-width="1.5" stroke-linejoin="round"><path d="M 9,36 C 12.39,35.03 19.11,36.43 22.5,34 C 25.89,36.43 32.61,35.03 36,36 C 36,36 37.65,36.54 39,38 C 38.32,38.97 37.35,38.99 36,38.5 C 32.61,37.53 25.89,38.96 22.5,37.5 C 19.11,38.96 12.39,37.53 9,38.5 C 7.65,38.99 6.68,38.97 6,38 C 7.35,36.54 9,36 9,36 z"/><path d="M 15,32 C 17.5,34.5 27.5,34.5 30,32 C 30.5,30.5 30,30 30,30 C 30,27.5 27.5,26 27.5,26 C 33,24.5 33.5,14.5 22.5,10.5 C 11.5,14.5 12,24.5 17.5,26 C 17.5,26 15,27.5 15,30 C 15,30 14.5,30.5 15,32 z"/><path d="M 25 8 A 2.5 2.5 0 1 1 20,8 A 2.5 2.5 0 1 1 25 8 z"/><path d="M 17.5,26 L 27.5,26 M 15,30 L 30,30 M 22.5,15.5 L 22.5,20.5 M 20,18 L 25,18" stroke="#fff"/></g></g>
<g transform="translate(307.15,83.89) scale(0.66)" filter="url(#sh)"><g fill="#111" stroke="#000" stroke-width="1.5" stroke-linejoin="round"><path d="M 22,10 C 32.5,11 38.5,18 38,39 L 15,39 C 15,30 25,32.5 23,18"/><path d="M 24,18 C 24.38,20.91 18.45,25.37 16,27 C 13,29 13.18,31.34 11,31 C 9.958,30.06 12.41,27.96 11,28 C 10,28 11.19,29.23 10,30 C 9,30 5.997,31 6,26 C 6,24 12,14 12,14 C 12,14 13.89,12.1 14,10.5 C 13.27,9.506 13.5,8.5 13.5,7.5 C 14.5,6.5 16.5,10 16.5,10 L 18.5,10 C 18.5,10 19.28,8.008 21,7 C 22,7 22,10 22,10"/><path d="M 24.55,10.4 L 24.1,11.85 L 24.6,12 C 27.75,13 30.25,14.49 32.5,18.75 C 34.75,23.01 35.75,29.06 35.25,39 L 35.2,39.5 L 37.45,39.5 L 37.5,39 C 38,28.94 36.62,22.15 34.25,17.66 C 31.88,13.17 28.46,11.02 25.06,10.5 L 24.55,10.4 z" fill="#fff" stroke="none"/></g></g>
<g transform="translate(335.95,83.89) scale(0.66)" filter="url(#sh)"><g fill="#111" stroke="#000" stroke-width="1.5" stroke-linejoin="round"><path d="M 9,39 L 36,39 L 36,36 L 9,36 L 9,39 z"/><path d="M 12,36 L 12,32 L 33,32 L 33,36 L 12,36 z"/><path d="M 11,14 L 11,9 L 15,9 L 15,11 L 20,11 L 20,9 L 25,9 L 25,11 L 30,11 L 30,9 L 34,9 L 34,14"/><path d="M 34,14 L 31,17 L 14,17 L 11,14"/><path d="M 31,17 L 31,29.5 L 14,29.5 L 14,17"/><path d="M 31,29.5 L 32.5,32 L 12.5,32 L 14,29.5"/><path d="M 11,14 L 34,14" fill="none"/><path d="M 12.5,35 L 32.5,35 M 13,31.5 L 32,31.5 M 14,29.5 L 31,29.5 M 14,16.5 L 31,16.5 M 11,14 L 34,14" fill="none" stroke="#fff" stroke-width="1"/></g></g>
<g transform="translate(278.35,112.69) scale(0.66)" filter="url(#sh)"><path d="m 22.5,9 c -2.21,0 -4,1.79 -4,4 0,0.89 0.29,1.71 0.78,2.38 C 17.33,16.5 16,18.59 16,21 c 0,2.03 0.94,3.84 2.41,5.03 C 15.41,27.09 11,31.58 11,39.5 H 34 C 34,31.58 29.59,27.09 26.59,26.03 28.06,24.84 29,23.03 29,21 29,18.59 27.67,16.5 25.72,15.38 26.21,14.71 26.5,13.89 26.5,13 c 0,-2.21 -1.79,-4 -4,-4 z" fill="#111" stroke="#000" stroke-width="1.5"/></g>
<g transform="translate(307.15,112.69) scale(0.66)" filter="url(#sh)"><path d="m 22.5,9 c -2.21,0 -4,1.79 -4,4 0,0.89 0.29,1.71 0.78,2.38 C 17.33,16.5 16,18.59 16,21 c 0,2.03 0.94,3.84 2.41,5.03 C 15.41,27.09 11,31.58 11,39.5 H 34 C 34,31.58 29.59,27.09 26.59,26.03 28.06,24.84 29,23.03 29,21 29,18.59 27.67,16.5 25.72,15.38 26.21,14.71 26.5,13.89 26.5,13 c 0,-2.21 -1.79,-4 -4,-4 z" fill="#111" stroke="#000" stroke-width="1.5"/></g>
<g transform="translate(335.95,112.69) scale(0.66)" filter="url(#sh)"><path d="m 22.5,9 c -2.21,0 -4,1.79 -4,4 0,0.89 0.29,1.71 0.78,2.38 C 17.33,16.5 16,18.59 16,21 c 0,2.03 0.94,3.84 2.41,5.03 C 15.41,27.09 11,31.58 11,39.5 H 34 C 34,31.58 29.59,27.09 26.59,26.03 28.06,24.84 29,23.03 29,21 29,18.59 27.67,16.5 25.72,15.38 26.21,14.71 26.5,13.89 26.5,13 c 0,-2.21 -1.79,-4 -4,-4 z" fill="#111" stroke="#000" stroke-width="1.5"/></g>
<g transform="translate(249.55,141.49) scale(0.66)" filter="url(#sh)"><path d="m 22.5,9 c -2.21,0 -4,1.79 -4,4 0,0.89 0.29,1.71 0.78,2.38 C 17.33,16.5 16,18.59 16,21 c 0,2.03 0.94,3.84 2.41,5.03 C 15.41,27.09 11,31.58 11,39.5 H 34 C 34,31.58 29.59,27.09 26.59,26.03 28.06,24.84 29,23.03 29,21 29,18.59 27.67,16.5 25.72,15.38 26.21,14.71 26.5,13.89 26.5,13 c 0,-2.21 -1.79,-4 -4,-4 z" fill="#111" stroke="#000" stroke-width="1.5"/></g>
<g transform="translate(278.35,141.49) scale(0.66)" filter="url(#sh)"><g fill="#fff" stroke="#000" stroke-width="1.5" stroke-linejoin="round" stroke-linecap="round"><path d="M 22.5,11.63 L 22.5,6 M 20,8 L 25,8" fill="none"/><path d="M 22.5,25 C 22.5,25 27,17.5 25.5,14.5 C 25.5,14.5 24.5,12 22.5,12 C 20.5,12 19.5,14.5 19.5,14.5 C 18,17.5 22.5,25 22.5,25"/><path d="M 12.5,37 C 18,40.5 27,40.5 32.5,37 L 32.5,30 C 32.5,30 41.5,25.5 38.5,19.5 C 34.5,13 25,16 22.5,23.5 L 22.5,27 L 22.5,23.5 C 20,16 10.5,13 6.5,19.5 C 3.5,25.5 12.5,30 12.5,30 L 12.5,37"/><path d="M 12.5,30 C 18,27 27,27 32.5,30 M 12.5,33.5 C 18,30.5 27,30.5 32.5,33.5 M 12.5,37 C 18,34 27,34 32.5,37" fill="none"/></g></g>
<g transform="translate(220.75,170.29) scale(0.66)" filter="url(#sh)"><g fill="#111" stroke="#000" stroke-width="1.5" stroke-linejoin="round"><path d="M 9,39 L 36,39 L 36,36 L 9,36 L 9,39 z"/><path d="M 12,36 L 12,32 L 33,32 L 33,36 L 12,36 z"/><path d="M 11,14 L 11,9 L 15,9 L 15,11 L 20,11 L 20,9 L 25,9 L 25,11 L 30,11 L 30,9 L 34,9 L 34,14"/><path d="M 34,14 L 31,17 L 14,17 L 11,14"/><path d="M 31,17 L 31,29.5 L 14,29.5 L 14,17"/><path d="M 31,29.5 L 32.5,32 L 12.5,32 L 14,29.5"/><path d="M 11,14 L 34,14" fill="none"/><path d="M 12.5,35 L 32.5,35 M 13,31.5 L 32,31.5 M 14,29.5 L 31,29.5 M 14,16.5 L 31,16.5 M 11,14 L 34,14" fill="none" stroke="#fff" stroke-width="1"/></g></g>
<g transform="translate(220.75,199.09) scale(0.66)" filter="url(#sh)"><path d="m 22.5,9 c -2.21,0 -4,1.79 -4,4 0,0.89 0.29,1.71 0.78,2.38 C 17.33,16.5 16,18.59 16,21 c 0,2.03 0.94,3.84 2.41,5.03 C 15.41,27.09 11,31.58 11,39.5 H 34 C 34,31.58 29.59,27.09 26.59,26.03 28.06,24.84 29,23.03 29,21 29,18.59 27.67,16.5 25.72,15.38 26.21,14.71 26.5,13.89 26.5,13 c 0,-2.21 -1.79,-4 -4,-4 z" fill="#fff" stroke="#000" stroke-width="1.5"/></g>
<g transform="translate(249.55,227.89) scale(0.66)" filter="url(#sh)"><g fill="#fff" stroke="#000" stroke-width="1.5" stroke-linejoin="round"><path d="M 9,36 C 12.39,35.03 19.11,36.43 22.5,34 C 25.89,36.43 32.61,35.03 36,36 C 36,36 37.65,36.54 39,38 C 38.32,38.97 37.35,38.99 36,38.5 C 32.61,37.53 25.89,38.96 22.5,37.5 C 19.11,38.96 12.39,37.53 9,38.5 C 7.65,38.99 6.68,38.97 6,38 C 7.35,36.54 9,36 9,36 z"/><path d="M 15,32 C 17.5,34.5 27.5,34.5 30,32 C 30.5,30.5 30,30 30,30 C 30,27.5 27.5,26 27.5,26 C 33,24.5 33.5,14.5 22.5,10.5 C 11.5,14.5 12,24.5 17.5,26 C 17.5,26 15,27.5 15,30 C 15,30 14.5,30.5 15,32 z"/><path d="M 25 8 A 2.5 2.5 0 1 1 20,8 A 2.5 2.5 0 1 1 25 8 z"/><path d="M 17.5,26 L 27.5,26 M 15,30 L 30,30 M 22.5,15.5 L 22.5,20.5 M 20,18 L 25,18" stroke="#000"/></g></g>
<g transform="translate(134.35,256.69) scale(0.66)" filter="url(#sh)"><path d="m 22.5,9 c -2.21,0 -4,1.79 -4,4 0,0.89 0.29,1.71 0.78,2.38 C 17.33,16.5 16,18.59 16,21 c 0,2.03 0.94,3.84 2.41,5.03 C 15.41,27.09 11,31.58 11,39.5 H 34 C 34,31.58 29.59,27.09 26.59,26.03 28.06,24.84 29,23.03 29,21 29,18.59 27.67,16.5 25.72,15.38 26.21,14.71 26.5,13.89 26.5,13 c 0,-2.21 -1.79,-4 -4,-4 z" fill="#fff" stroke="#000" stroke-width="1.5"/></g>
<g transform="translate(163.15,256.69) scale(0.66)" filter="url(#sh)"><path d="m 22.5,9 c -2.21,0 -4,1.79 -4,4 0,0.89 0.29,1.71 0.78,2.38 C 17.33,16.5 16,18.59 16,21 c 0,2.03 0.94,3.84 2.41,5.03 C 15.41,27.09 11,31.58 11,39.5 H 34 C 34,31.58 29.59,27.09 26.59,26.03 28.06,24.84 29,23.03 29,21 29,18.59 27.67,16.5 25.72,15.38 26.21,14.71 26.5,13.89 26.5,13 c 0,-2.21 -1.79,-4 -4,-4 z" fill="#fff" stroke="#000" stroke-width="1.5"/></g>
<g transform="translate(191.95,256.69) scale(0.66)" filter="url(#sh)"><path d="m 22.5,9 c -2.21,0 -4,1.79 -4,4 0,0.89 0.29,1.71 0.78,2.38 C 17.33,16.5 16,18.59 16,21 c 0,2.03 0.94,3.84 2.41,5.03 C 15.41,27.09 11,31.58 11,39.5 H 34 C 34,31.58 29.59,27.09 26.59,26.03 28.06,24.84 29,23.03 29,21 29,18.59 27.67,16.5 25.72,15.38 26.21,14.71 26.5,13.89 26.5,13 c 0,-2.21 -1.79,-4 -4,-4 z" fill="#fff" stroke="#000" stroke-width="1.5"/></g>
<g transform="translate(278.35,256.69) scale(0.66)" filter="url(#sh)"><path d="m 22.5,9 c -2.21,0 -4,1.79 -4,4 0,0.89 0.29,1.71 0.78,2.38 C 17.33,16.5 16,18.59 16,21 c 0,2.03 0.94,3.84 2.41,5.03 C 15.41,27.09 11,31.58 11,39.5 H 34 C 34,31.58 29.59,27.09 26.59,26.03 28.06,24.84 29,23.03 29,21 29,18.59 27.67,16.5 25.72,15.38 26.21,14.71 26.5,13.89 26.5,13 c 0,-2.21 -1.79,-4 -4,-4 z" fill="#fff" stroke="#000" stroke-width="1.5"/></g>
<g transform="translate(307.15,256.69) scale(0.66)" filter="url(#sh)"><path d="m 22.5,9 c -2.21,0 -4,1.79 -4,4 0,0.89 0.29,1.71 0.78,2.38 C 17.33,16.5 16,18.59 16,21 c 0,2.03 0.94,3.84 2.41,5.03 C 15.41,27.09 11,31.58 11,39.5 H 34 C 34,31.58 29.59,27.09 26.59,26.03 28.06,24.84 29,23.03 29,21 29,18.59 27.67,16.5 25.72,15.38 26.21,14.71 26.5,13.89 26.5,13 c 0,-2.21 -1.79,-4 -4,-4 z" fill="#fff" stroke="#000" stroke-width="1.5"/></g>
<g transform="translate(335.95,256.69) scale(0.66)" filter="url(#sh)"><path d="m 22.5,9 c -2.21,0 -4,1.79 -4,4 0,0.89 0.29,1.71 0.78,2.38 C 17.33,16.5 16,18.59 16,21 c 0,2.03 0.94,3.84 2.41,5.03 C 15.41,27.09 11,31.58 11,39.5 H 34 C 34,31.58 29.59,27.09 26.59,26.03 28.06,24.84 29,23.03 29,21 29,18.59 27.67,16.5 25.72,15.38 26.21,14.71 26.5,13.89 26.5,13 c 0,-2.21 -1.79,-4 -4,-4 z" fill="#fff" stroke="#000" stroke-width="1.5"/></g>
<g transform="translate(134.35,285.49) scale(0.66)" filter="url(#sh)"><g fill="#fff" stroke="#000" stroke-width="1.5" stroke-linejoin="round"><path d="M 9,39 L 36,39 L 36,36 L 9,36 L 9,39 z"/><path d="M 12,36 L 12,32 L 33,32 L 33,36 L 12,36 z"/><path d="M 11,14 L 11,9 L 15,9 L 15,11 L 20,11 L 20,9 L 25,9 L 25,11 L 30,11 L 30,9 L 34,9 L 34,14"/><path d="M 34,14 L 31,17 L 14,17 L 11,14"/><path d="M 31,17 L 31,29.5 L 14,29.5 L 14,17"/><path d="M 31,29.5 L 32.5,32 L 12.5,32 L 14,29.5"/><path d="M 11,14 L 34,14" fill="none"/></g></g>
<g transform="translate(220.75,285.49) scale(0.66)" filter="url(#sh)"><g fill="#fff" stroke="#000" stroke-width="1.5" stroke-linejoin="round"><circle cx="6" cy="12" r="2.2"/><circle cx="14" cy="9" r="2.2"/><circle cx="22.5" cy="8" r="2.2"/><circle cx="31" cy="9" r="2.2"/><circle cx="39" cy="12" r="2.2"/><path d="M 9,26 C 17.5,24.5 30,24.5 36,26 L 38.5,13.5 L 31,25 L 30.7,10.9 L 25.5,24.5 L 22.5,10 L 19.5,24.5 L 14.3,10.9 L 14,25 L 6.5,13.5 L 9,26 z"/><path d="M 9,26 C 9,28 10.5,28 11.5,30 C 12.5,31.5 12.5,31 12,33.5 C 10.5,34.5 11,36 11,36 C 9.5,37.5 11,38.5 11,38.5 C 17.5,39.5 27.5,39.5 34,38.5 C 34,38.5 35.5,37.5 34,36 C 34,36 34.5,34.5 33,33.5 C 32.5,31 32.5,31.5 33.5,30 C 34.5,28 36,28 36,26 C 27.5,24.5 17.5,24.5 9,26 z"/><path d="M 11.5,30 C 15,29 30,29 33.5,30 M 12,33.5 C 18,32.5 27,32.5 33,33.5 M 11,36 C 18,35 27,35 34,36" fill="none" stroke="#000"/></g></g>
<g transform="translate(249.55,285.49) scale(0.66)" filter="url(#sh)"><g fill="#fff" stroke="#000" stroke-width="1.5" stroke-linejoin="round" stroke-linecap="round"><path d="M 22.5,11.63 L 22.5,6 M 20,8 L 25,8" fill="none"/><path d="M 22.5,25 C 22.5,25 27,17.5 25.5,14.5 C 25.5,14.5 24.5,12 22.5,12 C 20.5,12 19.5,14.5 19.5,14.5 C 18,17.5 22.5,25 22.5,25"/><path d="M 12.5,37 C 18,40.5 27,40.5 32.5,37 L 32.5,30 C 32.5,30 41.5,25.5 38.5,19.5 C 34.5,13 25,16 22.5,23.5 L 22.5,27 L 22.5,23.5 C 20,16 10.5,13 6.5,19.5 C 3.5,25.5 12.5,30 12.5,30 L 12.5,37"/><path d="M 12.5,30 C 18,27 27,27 32.5,30 M 12.5,33.5 C 18,30.5 27,30.5 32.5,33.5 M 12.5,37 C 18,34 27,34 32.5,37" fill="none"/></g></g>
<g transform="translate(335.95,285.49) scale(0.66)" filter="url(#sh)"><g fill="#fff" stroke="#000" stroke-width="1.5" stroke-linejoin="round"><path d="M 9,39 L 36,39 L 36,36 L 9,36 L 9,39 z"/><path d="M 12,36 L 12,32 L 33,32 L 33,36 L 12,36 z"/><path d="M 11,14 L 11,9 L 15,9 L 15,11 L 20,11 L 20,9 L 25,9 L 25,11 L 30,11 L 30,9 L 34,9 L 34,14"/><path d="M 34,14 L 31,17 L 14,17 L 11,14"/><path d="M 31,17 L 31,29.5 L 14,29.5 L 14,17"/><path d="M 31,29.5 L 32.5,32 L 12.5,32 L 14,29.5"/><path d="M 11,14 L 34,14" fill="none"/></g></g>
<path d="M240.8 296.1L287.4 246.9" stroke="#cfc9ee" stroke-width="1.4" opacity=".95"/>
<path d="M289.4 245.4l-5 1.2 2.8 3.6z" fill="#c9c3ea"/>
<rect x="366" y="86" width="14" height="14" fill="#000"/>
</svg>
<div class="a" style="left:585px;top:63.5px;width:214px;height:12px;background:#d9d9d9"></div>
<div class="t" style="left:587.5px;top:67.9px;letter-spacing:-0.3px;-webkit-text-stroke:0.1px #000">Bases de données</div>
<svg class="a" style="left:0;top:0" width="800" height="80" viewBox="0 0 800 80"><rect x="779.8" y="68.6" width="3.4" height="3.4" fill="none" stroke="#333" stroke-width=".7"/><path d="M781.2 67.5h3.4v3.4" fill="none" stroke="#333" stroke-width=".7"/><path d="M791.3 67.8l4 4M795.3 67.8l-4 4" stroke="#333" stroke-width=".9"/></svg>
<div class="a" style="left:585px;top:76px;width:214px;height:222.5px;background:#fff;border-left:1px solid #a9a9a9;border-bottom:1px solid #a0a0a0"></div>
<div class="a" style="left:606px;top:76px;width:1px;height:13px;background:#e9e9e9"></div>
<div class="a" style="left:630px;top:76px;width:1px;height:13px;background:#e9e9e9"></div>
<div class="a" style="left:780px;top:76px;width:1px;height:13px;background:#e9e9e9"></div>
<div class="t" style="left:589px;top:81.3px;font-size:6.6px;-webkit-text-stroke:0.03px #000;color:#1a1a1a;">Taille</div>
<div class="t" style="left:609.5px;top:81.3px;font-size:6.6px;-webkit-text-stroke:0.03px #000;color:#1a1a1a;">Ouvrir</div>
<div class="t" style="left:693px;top:81.3px;font-size:6.6px;-webkit-text-stroke:0.03px #000;color:#1a1a1a;">Chemin</div>
<div class="t" style="left:783px;top:81.3px;font-size:6.6px;-webkit-text-stroke:0.03px #000;color:#1a1a1a;">Form</div>
<div class="t" style="left:587.5px;top:94.3px;font-size:6.6px;-webkit-text-stroke:0.03px #000;color:#1a1a1a;">1k</div>
<div class="t" style="left:632px;top:94.3px;font-size:6.6px;-webkit-text-stroke:0.03px #000;color:#1a1a1a;">G:/Echecs/FICS.pgn</div>
<div class="t" style="left:783px;top:94.3px;font-size:6.6px;-webkit-text-stroke:0.03px #000;color:#1a1a1a;letter-spacing:-0.4px">ANSI</div>
<div class="a" style="left:586px;top:103.0px;width:213px;height:13.3px;background:#f5f5f5"></div>
<div class="t" style="left:587.5px;top:107.6px;font-size:6.6px;-webkit-text-stroke:0.03px #000;color:#1a1a1a;">70k</div>
<div class="t" style="left:632px;top:107.6px;font-size:6.6px;-webkit-text-stroke:0.03px #000;color:#1a1a1a;">G:/Echecs/Olivier.pgn</div>
<div class="t" style="left:783px;top:107.6px;font-size:6.6px;-webkit-text-stroke:0.03px #000;color:#1a1a1a;letter-spacing:-0.4px">ANSI</div>
<div class="t" style="left:587.5px;top:120.9px;font-size:6.6px;-webkit-text-stroke:0.03px #000;color:#1a1a1a;">6k</div>
<div class="t" style="left:632px;top:120.9px;font-size:6.6px;-webkit-text-stroke:0.03px #000;color:#1a1a1a;">G:/Echecs/Ouvertures.pgn</div>
<div class="t" style="left:783px;top:120.9px;font-size:6.6px;-webkit-text-stroke:0.03px #000;color:#1a1a1a;letter-spacing:-0.4px">ANSI</div>
<div class="a" style="left:586px;top:129.6px;width:213px;height:13.3px;background:#f5f5f5"></div>
<div class="t" style="left:587.5px;top:134.2px;font-size:6.6px;-webkit-text-stroke:0.03px #000;color:#1a1a1a;">1k</div>
<div class="t" style="left:632px;top:134.2px;font-size:6.6px;-webkit-text-stroke:0.03px #000;color:#1a1a1a;">G:/Echecs/BlitzStream.pgn</div>
<div class="t" style="left:783px;top:134.2px;font-size:6.6px;-webkit-text-stroke:0.03px #000;color:#1a1a1a;letter-spacing:-0.4px">ANSI</div>
<div class="t" style="left:587.5px;top:147.5px;font-size:6.6px;-webkit-text-stroke:0.03px #000;color:#1a1a1a;">4k</div>
<div class="t" style="left:632px;top:147.5px;font-size:6.6px;-webkit-text-stroke:0.03px #000;color:#1a1a1a;">G:/Echecs/Saison2020-2021.pgn</div>
<div class="t" style="left:783px;top:147.5px;font-size:6.6px;-webkit-text-stroke:0.03px #000;color:#1a1a1a;letter-spacing:-0.4px">ANSI</div>
<div class="a" style="left:586px;top:156.2px;width:213px;height:13.3px;background:#f5f5f5"></div>
<div class="t" style="left:587.5px;top:160.8px;font-size:6.6px;-webkit-text-stroke:0.03px #000;color:#1a1a1a;">0</div>
<div class="t" style="left:632px;top:160.8px;font-size:6.6px;-webkit-text-stroke:0.03px #000;color:#1a1a1a;font-weight:bold;">G:/Echecs/Demo.pgn</div>
<div class="t" style="left:783px;top:160.8px;font-size:6.6px;-webkit-text-stroke:0.03px #000;color:#1a1a1a;letter-spacing:-0.4px">ANSI</div>
<div class="t" style="left:587.5px;top:174.1px;font-size:6.6px;-webkit-text-stroke:0.03px #000;color:#1a1a1a;">0</div>
<div class="t" style="left:632px;top:174.1px;font-size:6.6px;-webkit-text-stroke:0.03px #000;color:#1a1a1a;">Clipboard</div>
<div class="t" style="left:783px;top:174.1px;font-size:6.6px;-webkit-text-stroke:0.03px #000;color:#1a1a1a;letter-spacing:-0.4px">ANSI</div>
<svg class="a" style="left:0;top:0" width="800" height="200" viewBox="0 0 800 200"><defs><linearGradient id="fgg" x1="0" y1="0" x2="0" y2="1"><stop offset="0" stop-color="#eef22a"/><stop offset="1" stop-color="#86c21c"/></linearGradient><linearGradient id="fgd" x1="0" y1="0" x2="0" y2="1"><stop offset="0" stop-color="#8fd35a"/><stop offset="1" stop-color="#3f9a2a"/></linearGradient><linearGradient id="fgx" x1="0" y1="0" x2="1" y2="1"><stop offset="0" stop-color="#e9e9e9"/><stop offset="1" stop-color="#bdbdbd"/></linearGradient></defs><path d="M613.5 100.7v-7h3l1 -1h6v8z" fill="#8fc43a"/><path d="M614.8 97.4l3.6-6.6 5.2 3.6-2.6 4z" fill="#fbfbf4" stroke="#bdbdaa" stroke-width=".45"/><path d="M613 100.7l2.2-5.3h10.5l-2.2 5.3z" fill="url(#fgg)"/><path d="M613.5 114.0v-7h3l1 -1h6v8z" fill="#8fc43a"/><path d="M614.8 110.7l3.6-6.6 5.2 3.6-2.6 4z" fill="#fbfbf4" stroke="#bdbdaa" stroke-width=".45"/><path d="M613 114.0l2.2-5.3h10.5l-2.2 5.3z" fill="url(#fgg)"/><path d="M614 127.2v-8l1.2-.8h2.6l.8.8h3.6v8z" fill="#c2c2c2"/><path d="M614 127.2l.8-6h7.6v6z" fill="url(#fgx)"/><path d="M614 140.5v-8l1.2-.8h2.6l.8.8h3.6v8z" fill="#c2c2c2"/><path d="M614 140.5l.8-6h7.6v6z" fill="url(#fgx)"/><path d="M614 153.8v-8l1.2-.8h2.6l.8.8h3.6v8z" fill="#c2c2c2"/><path d="M614 153.8l.8-6h7.6v6z" fill="url(#fgx)"/><path d="M613.5 167.2v-7h3l1 -1h6v8z" fill="#5fae2e"/><path d="M614.8 163.8l3.6-6.6 5.2 3.6-2.6 4z" fill="#fbfbf4" stroke="#bdbdaa" stroke-width=".45"/><path d="M613 167.2l2.2-5.3h10.5l-2.2 5.3z" fill="url(#fgd)"/><path d="M620.5 159.3l2 2M622.5 159.3l-2 2" stroke="#e04a3a" stroke-width=".6"/><path d="M613.5 180.5v-7h3l1 -1h6v8z" fill="#8fc43a"/><path d="M614.8 177.2l3.6-6.6 5.2 3.6-2.6 4z" fill="#fbfbf4" stroke="#bdbdaa" stroke-width=".45"/><path d="M613 180.5l2.2-5.3h10.5l-2.2 5.3z" fill="url(#fgg)"/></svg>
<div class="a" style="left:586px;top:290px;width:213px;height:8px;background:#f0f0f0"></div>
<div class="a" style="left:643.2px;top:290.3px;width:73px;height:7.3px;background:#cdcdcd"></div>
<svg class="a" style="left:0;top:280px" width="800" height="20" viewBox="0 280 800 20"><path d="M591 291.8l-1.8 2 1.8 2M793.8 291.8l1.8 2-1.8 2" fill="none" stroke="#555" stroke-width=".9"/></svg>
<div class="a" style="left:585px;top:298.5px;width:59.5px;height:11px;background:#fff"></div>
<div class="t" style="left:590.6px;top:302.4px;letter-spacing:-0.4px;-webkit-text-stroke:0.1px #000">Bases de données</div>
<div class="a" style="left:644.5px;top:308.5px;width:44.5px;height:1px;background:#dadada"></div>
<div class="t" style="left:650px;top:302.1px;letter-spacing:-0.4px;-webkit-text-stroke:0.1px #000">Console FICS</div>
<div class="t" style="left:585px;top:313.3px;font-weight:bold;color:#111">Nouvelle partie</div>
<div class="t" style="left:585px;top:326.9px;letter-spacing:-0.22px;-webkit-text-stroke:0.1px #000"><span style="color:#0000ee;text-decoration:underline;text-decoration-thickness:.4px;text-decoration-color:rgba(40,40,240,.55)">B01</span> (Scandinavian: 2...Qxd5 3.Nc3)</div>
<div class="a" style="left:589px;top:337.5px;width:124.5px;height:126px;background:#fff;border:1px solid #a7a7a7"></div>
<div class="a" style="left:720.5px;top:342.5px;width:69px;height:11px;background:#efefef;border:1px solid #fbfbfb;border-right-color:#bdbdbd;border-bottom-color:#bdbdbd;box-shadow:0.5px 0.5px 0 #d6d6d6"></div>
<div class="t" style="left:723.0px;top:345.9px;letter-spacing:-0.4px;-webkit-text-stroke:0.05px #000">Coup</div>
<div class="a" style="left:730px;top:362px;width:16px;height:15.8px;background:#e5e5e5;border:1px solid #cfcfcf"></div>
<div class="t" style="left:730px;top:366.6px;width:16px;text-align:center;font-size:9px;-webkit-text-stroke:0;color:#222">!</div>
<div class="a" style="left:755px;top:362px;width:16px;height:15.8px;background:#e5e5e5;border:1px solid #cfcfcf"></div>
<div class="t" style="left:755px;top:366.6px;width:16px;text-align:center;font-size:9px;-webkit-text-stroke:0;color:#222">?</div>
<div class="a" style="left:730px;top:382px;width:16px;height:15.8px;background:#e5e5e5;border:1px solid #cfcfcf"></div>
<div class="t" style="left:730px;top:386.6px;width:16px;text-align:center;font-size:9px;-webkit-text-stroke:0;color:#222">!!</div>
<div class="a" style="left:755px;top:382px;width:16px;height:15.8px;background:#e5e5e5;border:1px solid #cfcfcf"></div>
<div class="t" style="left:755px;top:386.6px;width:16px;text-align:center;font-size:9px;-webkit-text-stroke:0;color:#222">??</div>
<div class="a" style="left:730px;top:402px;width:16px;height:15.8px;background:#e5e5e5;border:1px solid #cfcfcf"></div>
<div class="t" style="left:730px;top:406.6px;width:16px;text-align:center;font-size:9px;-webkit-text-stroke:0;color:#222">!?</div>
<div class="a" style="left:755px;top:402px;width:16px;height:15.8px;background:#e5e5e5;border:1px solid #cfcfcf"></div>
<div class="t" style="left:755px;top:406.6px;width:16px;text-align:center;font-size:9px;-webkit-text-stroke:0;color:#222">?!</div>
<div class="a" style="left:730px;top:422.5px;width:16px;height:8.5px;background:#e5e5e5;border:1px solid #cfcfcf;border-bottom:none"></div>
<div class="a" style="left:781px;top:357px;width:9px;height:74px;background:#f0f0f0"></div>
<div class="a" style="left:782px;top:366px;width:7px;height:47px;background:#cdcdcd"></div>
<svg class="a" style="left:0;top:350px" width="800" height="90" viewBox="0 350 800 90"><path d="M783.7 362.5l1.8-1.8 1.8 1.8M783.7 425.5l1.8 1.8 1.8-1.8" fill="none" stroke="#555" stroke-width=".8"/></svg>
<div class="a" style="left:720.5px;top:434px;width:69px;height:11px;background:#efefef;border:1px solid #fbfbfb;border-right-color:#bdbdbd;border-bottom-color:#bdbdbd;box-shadow:0.5px 0.5px 0 #d6d6d6"></div>
<div class="t" style="left:723.0px;top:437.4px;letter-spacing:-0.4px;-webkit-text-stroke:0.05px #000">Evaluation</div>
<div class="a" style="left:720.5px;top:448px;width:69px;height:11px;background:#efefef;border:1px solid #fbfbfb;border-right-color:#bdbdbd;border-bottom-color:#bdbdbd;box-shadow:0.5px 0.5px 0 #d6d6d6"></div>
<div class="t" style="left:723.0px;top:451.4px;letter-spacing:-0.4px;-webkit-text-stroke:0.05px #000">Autre</div>
<div class="a" style="left:585px;top:469px;width:59px;height:12px;background:#fff"></div>
<div class="t" style="left:591px;top:473.4px;letter-spacing:-0.22px;-webkit-text-stroke:0.1px #000">Texte de la partie</div>
<div class="t" style="left:648.5px;top:472.4px;letter-spacing:-0.25px;-webkit-text-stroke:0.1px #000">Liste des parties</div>
<div class="a" style="left:644px;top:480px;width:46px;height:1px;background:#dadada"></div>
<div class="t" style="left:592.6px;top:343.2px;font-size:8.2px;color:#000"><span style="color:#151515">1. </span><b>e4 d5</b><span style="color:#151515"> 2. </span><b>exd5 Dxd5</b><span style="color:#151515"> 3. </span><b>Cc3</b></div>
<div class="t" style="left:592.6px;top:353.7px;font-size:8.2px;color:#000"><b>De5+</b><span style="color:#151515"> 4. </span><b>Fe2 e6</b><span style="color:#151515"> 5. </span><b>Cf3 Dd6</b><span style="color:#151515"> 6.</span></div>
<div class="t" style="left:592.6px;top:364.2px;font-size:8.2px;color:#000"><b>d4 Cc6</b><span style="color:#151515"> 7. </span><b>Fe3 Ce5</b><span style="color:#151515"> 8. </span><b>Cxe5 b6</b></div>
<div class="t" style="left:592.6px;top:375.0px;font-size:8.2px;color:#000"><span style="color:#151515">9. </span><b>Fb5+ Re7</b><span style="color:#151515"> 10. </span><b>Cc6+ Rf6</b><span style="color:#151515"> 11.</span></div>
<div class="t" style="left:592.6px;top:385.6px;font-size:8.2px;color:#000"><b>Ce4+ Rf5</b><span style="color:#151515"> 12. </span><b>Cxd6+ Rf6</b><span style="color:#151515"> 13.</span></div>
<div class="t" style="left:592.6px;top:396.3px;font-size:8.2px;color:#000"><b>Cxc8 Txc8</b><span style="color:#151515"> 14. </span><b>Cxa7 Td8</b><span style="color:#151515"> 15.</span></div>
<div class="t" style="left:592.6px;top:406.8px;font-size:8.2px;color:#000"><b>Cc6 Td5</b><span style="color:#151515"> 16. </span><b style="background:#ececec">Fc4</b></div>
<!-- STATUS BAR -->
<div class="a" style="left:1px;top:481.5px;width:798px;height:1px;background:#cfcfcf"></div>
<div class="t" style="left:6px;top:486.4px">Demo: tous/0</div>
<div class="a" style="left:201.5px;top:484px;width:1px;height:11px;background:#dcdcdc"></div>
<div class="a" style="left:204px;top:484px;width:1px;height:11px;background:#dcdcdc"></div>
<div class="a" style="left:204px;top:484px;width:200px;height:1px;background:#dcdcdc"></div>
<div class="a" style="left:404.5px;top:484px;width:1px;height:11px;background:#dcdcdc"></div>
<div class="a" style="left:407px;top:484px;width:1px;height:11px;background:#dcdcdc"></div>
<div class="a" style="left:407px;top:484px;width:199px;height:1px;background:#dcdcdc"></div>
<div class="a" style="left:606px;top:484px;width:1px;height:11px;background:#dcdcdc"></div>
<div class="a" style="left:610px;top:483px;width:76px;height:11px;background:#e5e5e5;border:1px solid #adadad"></div>
<div class="t" style="left:613px;top:486.6px">Intervalle de jeu auto :</div>
<svg class="a" style="left:0;top:470px" width="800" height="27" viewBox="0 470 800 27"><path d="M679.5 488l1.8 1.8 1.8-1.8" fill="none" stroke="#444" stroke-width=".7"/><path d="M694 488.5h58.5" stroke="#d6d6d6" stroke-width="1.2"/><path d="M790 494l5-5M793 494l2-2" stroke="#bbb" stroke-width=".6"/></svg>
<div class="a" style="left:689px;top:482.5px;width:5.5px;height:11px;background:#0078d7"></div>
<div class="a" style="left:753.5px;top:484px;width:1px;height:11px;background:#e2e2e2"></div><div class="a" style="left:790px;top:484px;width:1px;height:11px;background:#e2e2e2"></div>
<div class="t" style="left:756px;top:486.6px">0s/en boucl</div>
<div class="a" style="left:1px;top:496px;width:798px;height:1px;background:#8a8a8a"></div>


<div class="a" style="left:75px;top:28px;width:151px;height:197px;background:#f0f0f0;border:1px solid #d4d4d4;box-shadow:1px 1px 1px rgba(0,0,0,.12)"></div>
<div class="a" style="left:77px;top:64.2px;width:147.3px;height:11.5px;background:#91c9f7"></div>
<div class="t" style="left:94px;top:32.5px"><span class="u">N</span>ouvelle</div>
<div class="t" style="left:177px;top:32.5px">Ctrl+N</div>
<div class="t" style="left:94px;top:44.2px"><span class="u">C</span>harger</div>
<div class="t" style="left:94px;top:56.1px">Charger récent</div>
<div class="t" style="left:94px;top:67.8px"><span class="u">E</span>nregistrer...</div>
<div class="t" style="left:177px;top:67.8px">Ctrl+S</div>
<div class="t" style="left:94px;top:79.5px">Enregistrer</div>
<div class="t" style="left:94px;top:91.0px">Données de jeu...</div>
<div class="a" style="left:93px;top:100.9px;width:131px;height:1px;background:#d7d7d7"></div>
<div class="t" style="left:94px;top:107.6px">Match</div>
<div class="t" style="left:177px;top:107.6px">Ctrl+M</div>
<div class="a" style="left:93px;top:117.5px;width:131px;height:1px;background:#d7d7d7"></div>
<div class="t" style="left:94px;top:124.0px">Entrainement</div>
<div class="t" style="left:177px;top:124.0px">Ctrl+R</div>
<div class="t" style="left:94px;top:135.9px">Réponse automatique</div>
<div class="t" style="left:177px;top:135.9px">Meta+Shift+R</div>
<div class="t" style="left:94px;top:147.5px">Joueur automatique</div>
<div class="t" style="left:177px;top:147.5px">Ctrl+Shift+R</div>
<div class="t" style="left:94px;top:159.2px">Analyse automatique</div>
<div class="t" style="left:177px;top:159.2px">Ctrl+Alt+R</div>
<div class="t" style="left:94px;top:170.9px">Match de moteurs</div>
<div class="t" style="left:177px;top:170.9px">Ctrl+Alt+M</div>
<div class="a" style="left:93px;top:181.0px;width:131px;height:1px;background:#d7d7d7"></div>
<div class="t" style="left:94px;top:187.2px"><span class="u">R</span>etourner l'échiquier</div>
<div class="t" style="left:177px;top:187.2px">Ctrl+B</div>
<div class="t" style="left:94px;top:199.4px">Aller <span class="u">v</span>ers</div>
<div class="a" style="left:93px;top:208.5px;width:131px;height:1px;background:#d7d7d7"></div>
<div class="t" style="left:94px;top:215.6px">Réorganiser</div>
<svg class="a" style="left:0;top:0" width="800" height="240" viewBox="0 0 800 240"><circle cx="82.5" cy="34.5" r="3.3" fill="#1d6b3c"/><path d="M80 35.0l5 -1.5" stroke="#7fc79a" stroke-width=".6"/><path d="M216.5 44.4l2.3 2.3-2.3 2.3z" fill="#222"/><path d="M216.5 56.3l2.3 2.3-2.3 2.3z" fill="#222"/><path d="M78.5 110.1l4-1.8 4 1.8-4 1.8z" fill="#3c8fd6"/><path d="M81 110.9c0-2.5.6-4 1.6-4.6 1 .8 1.6 2 1.2 4.6z" fill="#222"/><circle cx="82.5" cy="126.4" r="3.3" fill="#1c70c8"/><path d="M81 127.4l.8-2 .8 2M83.5 125.4v2" stroke="#0a2b55" stroke-width=".6" fill="none"/><circle cx="82.5" cy="138.3" r="3.3" fill="#2a8de0"/><path d="M81.5 136.8l2.5 1.5-2.5 1.5z" fill="none" stroke="#e8f4ff" stroke-width=".6"/><circle cx="82.5" cy="149.9" r="3.3" fill="#2a8de0"/><path d="M81 148.4l1.8 1.5-1.8 1.5zM82.8 148.4l1.8 1.5-1.8 1.5z" fill="#fff"/><circle cx="82.5" cy="162.0" r="3" fill="#a7c3dd" stroke="#3f7fc2" stroke-width=".8"/><path d="M82.5 162.0l2-3" stroke="#2a6dc0" stroke-width=".7"/><rect x="81" y="170.0" width="3" height="6.6" fill="#222"/><circle cx="82.5" cy="189.7" r="3.1" fill="#fff" stroke="#2a8ad6" stroke-width=".9"/><circle cx="81.6" cy="189.9" r=".8" fill="#222"/><circle cx="83.4" cy="189.9" r=".8" fill="#222"/><path d="M216.5 199.5l2.3 2.3-2.3 2.3z" fill="#222"/><path d="M216.5 215.7l2.3 2.3-2.3 2.3z" fill="#222"/></svg>
</body></html>
